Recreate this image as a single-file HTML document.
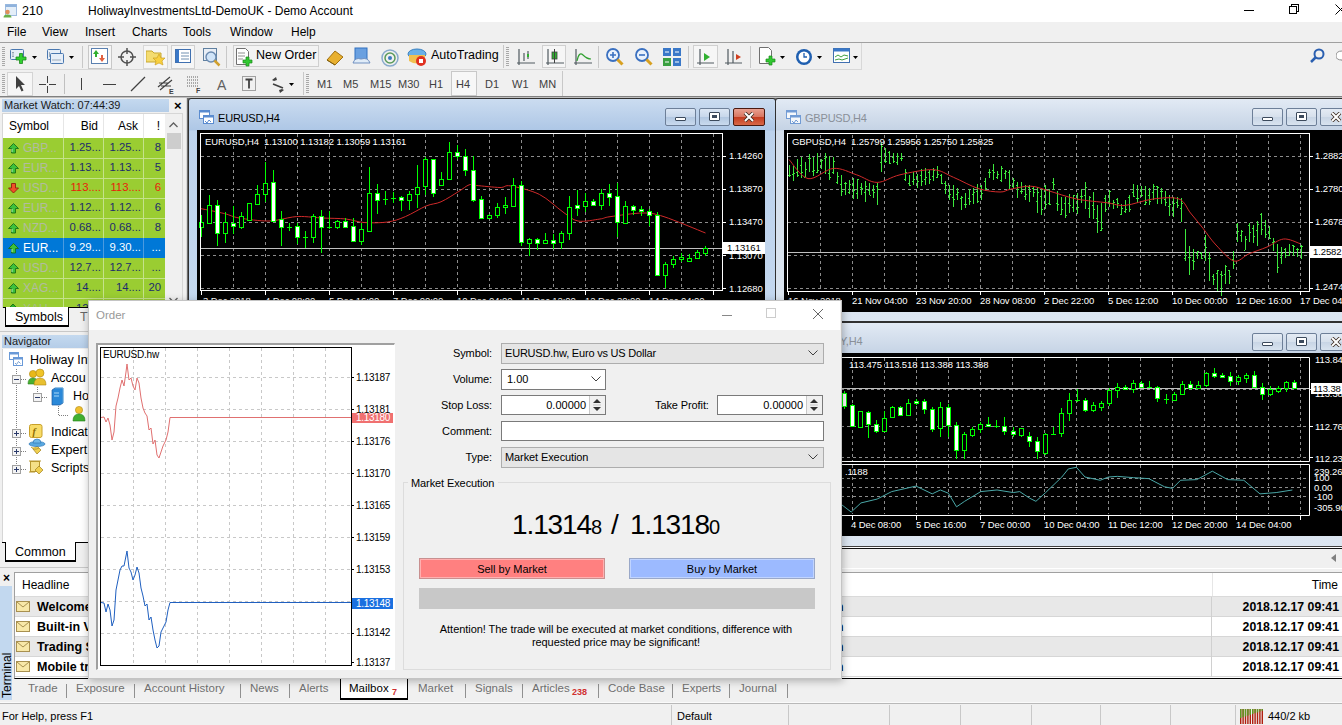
<!DOCTYPE html><html><head><meta charset="utf-8"><style>
*{margin:0;padding:0;box-sizing:border-box}
html,body{width:1342px;height:725px;overflow:hidden;background:#f0f0f0;font-family:"Liberation Sans",sans-serif;font-size:12px;color:#000}
.a{position:absolute}
.t{position:absolute;white-space:nowrap;line-height:1}
svg{position:absolute;overflow:hidden}
.ct{position:absolute;white-space:nowrap;line-height:1;font-size:9.5px;letter-spacing:-0.1px;color:#fff}
</style></head><body>
<div class="a" style="left:0px;top:0px;width:1342px;height:22px;background:#fff"></div>
<svg style="left:2px;top:4px" width="16" height="14"><rect x="3.5" y="0.5" width="11" height="11" fill="#e4eef8" stroke="#9fbce0"/><rect x="3.5" y="0.5" width="11" height="2.5" fill="#8fb2dc"/><circle cx="5.5" cy="8" r="2.3" fill="#e0905a"/><path d="M1.5 13.5 Q1.5 10.5 5.5 10.5 Q9.5 10.5 9.5 13.5Z" fill="#6ab04a"/></svg>
<div class="t" style="left:22px;top:5px;font-size:12.5px;color:#000">210</div>
<div class="t" style="left:88px;top:5px;font-size:12px;color:#000">HoliwayInvestmentsLtd-DemoUK - Demo Account</div>
<div class="a" style="left:1244px;top:10px;width:10px;height:1px;background:#000"></div>
<div class="a" style="left:1291px;top:4px;width:8px;height:8px;border:1px solid #000;background:#fff"></div>
<div class="a" style="left:1289px;top:6px;width:8px;height:8px;border:1px solid #000;background:#fff"></div>
<svg style="left:1335px;top:4px" width="11" height="11"><path d="M0.5 0.5L10.5 10.5M10.5 0.5L0.5 10.5" stroke="#000" stroke-width="1"/></svg>
<div class="t" style="left:7px;top:26px;font-size:12px">File</div>
<div class="t" style="left:42px;top:26px;font-size:12px">View</div>
<div class="t" style="left:85px;top:26px;font-size:12px">Insert</div>
<div class="t" style="left:132px;top:26px;font-size:12px">Charts</div>
<div class="t" style="left:183px;top:26px;font-size:12px">Tools</div>
<div class="t" style="left:230px;top:26px;font-size:12px">Window</div>
<div class="t" style="left:291px;top:26px;font-size:12px">Help</div>
<div class="a" style="left:0px;top:42px;width:1342px;height:1px;background:#a0a0a0"></div>
<div class="a" style="left:0px;top:69px;width:862px;height:1px;background:#d8d8d8"></div>
<div class="a" style="left:861px;top:43px;width:1px;height:26px;background:#d8d8d8"></div>
<div class="a" style="left:0px;top:96px;width:1342px;height:1px;background:#808080"></div>
<div class="a" style="left:0px;top:97px;width:1342px;height:1px;background:#bfbfbf"></div>
<svg style="left:2px;top:47px" width="4" height="20"><rect x="0" y="0" width="3" height="1" fill="#a8a8a8"/><rect x="0" y="2" width="3" height="1" fill="#a8a8a8"/><rect x="0" y="4" width="3" height="1" fill="#a8a8a8"/><rect x="0" y="6" width="3" height="1" fill="#a8a8a8"/><rect x="0" y="8" width="3" height="1" fill="#a8a8a8"/><rect x="0" y="10" width="3" height="1" fill="#a8a8a8"/><rect x="0" y="12" width="3" height="1" fill="#a8a8a8"/><rect x="0" y="14" width="3" height="1" fill="#a8a8a8"/><rect x="0" y="16" width="3" height="1" fill="#a8a8a8"/><rect x="0" y="18" width="3" height="1" fill="#a8a8a8"/></svg>
<svg style="left:2px;top:74px" width="4" height="20"><rect x="0" y="0" width="3" height="1" fill="#a8a8a8"/><rect x="0" y="2" width="3" height="1" fill="#a8a8a8"/><rect x="0" y="4" width="3" height="1" fill="#a8a8a8"/><rect x="0" y="6" width="3" height="1" fill="#a8a8a8"/><rect x="0" y="8" width="3" height="1" fill="#a8a8a8"/><rect x="0" y="10" width="3" height="1" fill="#a8a8a8"/><rect x="0" y="12" width="3" height="1" fill="#a8a8a8"/><rect x="0" y="14" width="3" height="1" fill="#a8a8a8"/><rect x="0" y="16" width="3" height="1" fill="#a8a8a8"/><rect x="0" y="18" width="3" height="1" fill="#a8a8a8"/></svg>
<svg style="left:506px;top:47px" width="4" height="20"><rect x="0" y="0" width="3" height="1" fill="#a8a8a8"/><rect x="0" y="2" width="3" height="1" fill="#a8a8a8"/><rect x="0" y="4" width="3" height="1" fill="#a8a8a8"/><rect x="0" y="6" width="3" height="1" fill="#a8a8a8"/><rect x="0" y="8" width="3" height="1" fill="#a8a8a8"/><rect x="0" y="10" width="3" height="1" fill="#a8a8a8"/><rect x="0" y="12" width="3" height="1" fill="#a8a8a8"/><rect x="0" y="14" width="3" height="1" fill="#a8a8a8"/><rect x="0" y="16" width="3" height="1" fill="#a8a8a8"/><rect x="0" y="18" width="3" height="1" fill="#a8a8a8"/></svg>
<svg style="left:306px;top:74px" width="4" height="20"><rect x="0" y="0" width="3" height="1" fill="#a8a8a8"/><rect x="0" y="2" width="3" height="1" fill="#a8a8a8"/><rect x="0" y="4" width="3" height="1" fill="#a8a8a8"/><rect x="0" y="6" width="3" height="1" fill="#a8a8a8"/><rect x="0" y="8" width="3" height="1" fill="#a8a8a8"/><rect x="0" y="10" width="3" height="1" fill="#a8a8a8"/><rect x="0" y="12" width="3" height="1" fill="#a8a8a8"/><rect x="0" y="14" width="3" height="1" fill="#a8a8a8"/><rect x="0" y="16" width="3" height="1" fill="#a8a8a8"/><rect x="0" y="18" width="3" height="1" fill="#a8a8a8"/></svg>
<svg style="left:10px;top:48px" width="20" height="20"><rect x="0.5" y="1.5" width="13" height="10" rx="1" fill="#e6eef8" stroke="#4a78b0"/><path d="M3 4v5M2 5l1-1 1 1M2 8l1 1 1-1" stroke="#8090a0" stroke-width="0.7" fill="none"/><path d="M9.5 5.5h3v3.5h3.5v3h-3.5v3.5h-3v-3.5h-3.5v-3h3.5z" fill="#30d030" stroke="#1a8a1a" stroke-width="0.8"/></svg>
<svg style="left:32px;top:56px" width="6" height="4"><path d="M0 0h5l-2.5 3z" fill="#000"/></svg>
<svg style="left:47px;top:48px" width="20" height="20"><rect x="0.5" y="1.5" width="13" height="10" rx="1" fill="#e6eef8" stroke="#4a78b0"/><rect x="3.5" y="5.5" width="13" height="10" rx="1" fill="#e6eef8" stroke="#4a78b0"/><path d="M5 12h9M2.5 4v5" stroke="#8090a0" stroke-width="0.7"/></svg>
<svg style="left:69px;top:56px" width="6" height="4"><path d="M0 0h5l-2.5 3z" fill="#000"/></svg>
<div class="a" style="left:82px;top:46px;width:1px;height:22px;background:#c8c8c8"></div>
<div class="a" style="left:88px;top:45px;width:24px;height:24px;border:1px solid #c8c8c8;background:#f6f6f6"></div>
<svg style="left:91px;top:48px" width="20" height="20"><rect x="0.5" y="0.5" width="16" height="15" fill="#fff" stroke="#5a80b0"/><path d="M5 2l3 4h-2v3h-2v-3h-2z" fill="#30b030"/><path d="M11 14l-3-4h2v-3h2v3h2z" fill="#e06040"/></svg>
<svg style="left:118px;top:48px" width="20" height="20"><circle cx="9" cy="9" r="6" fill="none" stroke="#505050" stroke-width="1.5"/><path d="M9 0v6M9 12v6M0 9h6M12 9h6" stroke="#505050" stroke-width="1.5"/></svg>
<div class="a" style="left:143px;top:45px;width:25px;height:24px;border:1px solid #d8d8d8;background:#f6f6f6"></div>
<svg style="left:146px;top:48px" width="20" height="20"><path d="M0 3h6l2 2h7v9h-15z" fill="#f4dc70" stroke="#c8a830"/><path d="M13 6l2 4h4l-3 3 1 4-4-2-4 2 1-4-3-3h4z" fill="#f8d040" stroke="#c89818" stroke-width="0.6"/></svg>
<div class="a" style="left:171px;top:45px;width:24px;height:24px;border:1px solid #d0d0d0;background:#f6f6f6"></div>
<svg style="left:175px;top:48px" width="20" height="20"><rect x="0.5" y="1.5" width="15" height="13" fill="#fff" stroke="#4070b0"/><rect x="1" y="2" width="3" height="12" fill="#3a78c8"/><path d="M6 5h8M6 8h8M6 11h8" stroke="#7090b0"/></svg>
<svg style="left:203px;top:48px" width="20" height="20"><rect x="0.5" y="0.5" width="13" height="12" fill="#e8eef6" stroke="#6080a0"/><circle cx="8" cy="9" r="5" fill="#d0e4f8" stroke="#6a8ab0" stroke-width="1.4"/><path d="M11.5 12.5l5 5" stroke="#d0a030" stroke-width="2.5"/></svg>
<div class="a" style="left:226px;top:46px;width:1px;height:22px;background:#c8c8c8"></div>
<div class="a" style="left:233px;top:45px;width:86px;height:22px;border:1px solid #cfcfcf;background:#f3f3f3"></div>
<svg style="left:236px;top:48px" width="20" height="20"><path d="M0.5 0.5h9l3 3v13h-12z" fill="#fff" stroke="#707070"/><path d="M2 5h7M2 8h7M2 11h5" stroke="#909090"/><path d="M10 9h3v3h3v3h-3v3h-3v-3h-3v-3h3z" fill="#32c832" stroke="#1a8a1a" stroke-width="0.7"/></svg>
<div class="t" style="left:256px;top:49px;font-size:12.5px">New Order</div>
<svg style="left:326px;top:49px" width="20" height="20"><path d="M1 11l8-9 8 6-8 8z" fill="#e8b030" stroke="#a07010"/><path d="M1 11l8 5" stroke="#806010"/></svg>
<svg style="left:352px;top:47px" width="20" height="20"><rect x="3" y="1" width="12" height="12" fill="#6aa0e0" stroke="#3070c0"/><path d="M1 16 Q3 10 9 12 Q16 10 18 16z" fill="#e0ecf8" stroke="#7090c0"/></svg>
<svg style="left:380px;top:47px" width="20" height="20"><circle cx="10" cy="11" r="8" fill="none" stroke="#88aacc" stroke-width="1.5"/><circle cx="10" cy="11" r="5" fill="none" stroke="#5a9a5a" stroke-width="1.5"/><circle cx="10" cy="11" r="2" fill="#3a7ac0"/></svg>
<svg style="left:407px;top:47px" width="20" height="20"><ellipse cx="10" cy="7" rx="9" ry="5" fill="#6ab0e8" stroke="#3a80c0"/><path d="M2 8h16v6q-8 5-16 0z" fill="#f0c050"/><circle cx="14" cy="14" r="5" fill="#e03020"/><rect x="12" y="12" width="4" height="4" fill="#fff"/></svg>
<div class="t" style="left:431px;top:49px;font-size:12.5px">AutoTrading</div>
<div class="a" style="left:503px;top:45px;width:1px;height:23px;background:#c8c8c8"></div>
<svg style="left:516px;top:47px" width="20" height="20"><path d="M3 2v16M1 16h18M8 6v8M12 4v8" stroke="#505a60" stroke-width="1.2" fill="none"/><path d="M12 7v3" stroke="#30b030" stroke-width="2"/></svg>
<div class="a" style="left:542px;top:45px;width:24px;height:23px;border:1px solid #d0d0d0;background:#f6f6f6"></div>
<svg style="left:545px;top:47px" width="20" height="20"><path d="M3 2v16M1 16h18" stroke="#505a60" stroke-width="1.2" fill="none"/><rect x="7" y="5" width="5" height="7" fill="#30b030" stroke="#404040" stroke-width="0.8"/><path d="M9.5 2v14" stroke="#404040"/></svg>
<svg style="left:573px;top:47px" width="20" height="20"><path d="M3 2v16M1 16h18" stroke="#505a60" stroke-width="1.2" fill="none"/><path d="M4 14 Q6 4 10 8 T18 12" stroke="#30a030" stroke-width="1.2" fill="none"/></svg>
<div class="a" style="left:598px;top:46px;width:1px;height:22px;background:#c8c8c8"></div>
<svg style="left:605px;top:47px" width="20" height="20"><circle cx="8" cy="8" r="6" fill="#eaf2fc" stroke="#3a70c0" stroke-width="1.8"/><path d="M5 8h6M8 5v6" stroke="#3a70c0" stroke-width="1.6"/><path d="M12.5 12.5l5 5" stroke="#d8a020" stroke-width="3"/></svg>
<svg style="left:634px;top:47px" width="20" height="20"><circle cx="8" cy="8" r="6" fill="#eaf2fc" stroke="#3a70c0" stroke-width="1.8"/><path d="M5 8h6" stroke="#3a70c0" stroke-width="1.6"/><path d="M12.5 12.5l5 5" stroke="#d8a020" stroke-width="3"/></svg>
<svg style="left:663px;top:47px" width="20" height="20"><rect x="0" y="1" width="8" height="8" fill="#3a78c8"/><rect x="10" y="1" width="8" height="8" fill="#3a78c8"/><rect x="0" y="11" width="8" height="8" fill="#3aa040"/><rect x="10" y="11" width="8" height="8" fill="#3a78c8"/><path d="M2 5h4M12 5h4M2 15h4M12 15h4" stroke="#fff"/></svg>
<div class="a" style="left:688px;top:46px;width:1px;height:22px;background:#c8c8c8"></div>
<div class="a" style="left:693px;top:45px;width:25px;height:23px;border:1px solid #d0d0d0;background:#f6f6f6"></div>
<svg style="left:696px;top:47px" width="20" height="20"><path d="M4 2v16M1 16h17" stroke="#505a60" stroke-width="1.2" fill="none"/><path d="M8 6l6 4-6 4z" fill="#30b030"/></svg>
<svg style="left:724px;top:47px" width="20" height="20"><path d="M4 2v16M1 16h17M9 4v12" stroke="#505a60" stroke-width="1.2" fill="none"/><path d="M17 10l-5-3v6z" fill="#d04020"/></svg>
<div class="a" style="left:750px;top:46px;width:1px;height:22px;background:#c8c8c8"></div>
<svg style="left:759px;top:47px" width="20" height="20"><path d="M0.5 0.5h9l3 3v13h-12z" fill="#fff" stroke="#707070"/><path d="M10 9h3v3h3v3h-3v3h-3v-3h-3v-3h3z" fill="#32c832" stroke="#1a8a1a" stroke-width="0.7"/></svg>
<svg style="left:780px;top:56px" width="6" height="4"><path d="M0 0h5l-2.5 3z" fill="#000"/></svg>
<svg style="left:795px;top:47px" width="20" height="20"><circle cx="9" cy="10" r="8" fill="#1f5fb0"/><circle cx="9" cy="10" r="5.5" fill="#fff"/><path d="M9 6v4h3" stroke="#1f5fb0" stroke-width="1.3" fill="none"/></svg>
<svg style="left:817px;top:56px" width="6" height="4"><path d="M0 0h5l-2.5 3z" fill="#000"/></svg>
<svg style="left:833px;top:48px" width="20" height="20"><rect x="0.5" y="0.5" width="16" height="14" fill="#fff" stroke="#4070b0"/><rect x="0.5" y="0.5" width="16" height="3" fill="#3a78c8"/><path d="M2 9l3-2 3 2 3-2 4 1M2 12l4-1 3 1 6-2" stroke="#40a040" fill="none"/></svg>
<svg style="left:853px;top:56px" width="6" height="4"><path d="M0 0h5l-2.5 3z" fill="#000"/></svg>
<svg style="left:1309px;top:48px" width="20" height="20"><circle cx="10" cy="6" r="4.5" fill="none" stroke="#2a5fb0" stroke-width="2"/><path d="M7 9l-5 5" stroke="#2a5fb0" stroke-width="2.5"/></svg>
<svg style="left:1336px;top:50px" width="8" height="16"><path d="M6 1 Q0 1 0 6 Q0 10 6 10 L7 13 L9 10 Q12 9 12 6" fill="#fff" stroke="#909090"/></svg>
<div class="a" style="left:7px;top:72px;width:26px;height:24px;border:1px solid #d4d4d4;background:#f6f6f6"></div>
<svg style="left:13px;top:75px" width="20" height="20"><path d="M3 1l9 9h-4l2.5 5.5-2 1-2.5-5.5-3 3z" fill="#404040"/></svg>
<svg style="left:39px;top:76px" width="20" height="20"><path d="M8.5 0v7M8.5 10v7M0 8.5h7M10 8.5h7" stroke="#404040" stroke-width="1"/></svg>
<div class="a" style="left:64px;top:74px;width:1px;height:20px;background:#c0c0c0"></div>
<div class="a" style="left:81px;top:78px;width:1px;height:12px;background:#404040"></div>
<div class="a" style="left:103px;top:84px;width:13px;height:1px;background:#404040"></div>
<svg style="left:130px;top:76px" width="20" height="20"><path d="M1 15L15 1" stroke="#404040" stroke-width="1.3"/></svg>
<svg style="left:157px;top:75px" width="20" height="20"><path d="M1 12l12-10M3 15l12-10M2 8h10M4 11h10" stroke="#404040" stroke-width="1.2" fill="none"/><text x="12" y="19" font-size="7" font-family="Liberation Sans" font-weight="bold" fill="#404040">E</text></svg>
<svg style="left:186px;top:75px" width="20" height="20"><path d="M1 2h12M1 5h12M1 8h12M1 11h12" stroke="#606060" stroke-dasharray="1 1"/><text x="10" y="18" font-size="7" font-family="Liberation Sans" font-weight="bold" fill="#404040">F</text></svg>
<div class="t" style="left:217px;top:78px;font-size:14px;color:#606060">A</div>
<svg style="left:242px;top:76px" width="20" height="20"><rect x="0.5" y="0.5" width="13" height="14" fill="none" stroke="#505050" stroke-dasharray="1 1"/><path d="M3.5 3.5h7M7 3.5v9" stroke="#404040" stroke-width="1.8"/></svg>
<svg style="left:271px;top:76px" width="20" height="20"><path d="M1 4l4-3 1 3-3 1zM13 14l-4 3-1-3 3-1z" fill="#404040"/><path d="M2 8l10 4" stroke="#404040" stroke-width="1.8"/></svg>
<svg style="left:289px;top:83px" width="6" height="4"><path d="M0 0h5l-2.5 3z" fill="#000"/></svg>
<div class="a" style="left:303px;top:72px;width:1px;height:23px;background:#c8c8c8"></div>
<div class="t" style="left:317px;top:79px;font-size:11px;color:#404040">M1</div>
<div class="t" style="left:343px;top:79px;font-size:11px;color:#404040">M5</div>
<div class="t" style="left:370px;top:79px;font-size:11px;color:#404040">M15</div>
<div class="t" style="left:398px;top:79px;font-size:11px;color:#404040">M30</div>
<div class="t" style="left:429px;top:79px;font-size:11px;color:#404040">H1</div>
<div class="a" style="left:451px;top:71px;width:26px;height:25px;border:1px solid #c8c8c8;background:#f7f7f7"></div>
<div class="t" style="left:456px;top:79px;font-size:11px;color:#404040">H4</div>
<div class="t" style="left:485px;top:79px;font-size:11px;color:#404040">D1</div>
<div class="t" style="left:512px;top:79px;font-size:11px;color:#404040">W1</div>
<div class="t" style="left:539px;top:79px;font-size:11px;color:#404040">MN</div>
<div class="a" style="left:562px;top:71px;width:1px;height:25px;background:#c8c8c8"></div>
<div class="a" style="left:187px;top:98px;width:1155px;height:470px;background:#6d6d6d"></div>
<div class="a" style="left:0px;top:98px;width:187px;height:236px;background:#f0f0f0"></div>
<div class="a" style="left:186px;top:98px;width:1px;height:470px;background:#d8d8d8"></div>
<div class="a" style="left:2px;top:99px;width:167px;height:13px;background:linear-gradient(#c4d9ef,#b5cde8)"></div>
<div class="t" style="left:4px;top:100px;font-size:11px;color:#1a1a1a">Market Watch: 07:44:39</div>
<div class="t" style="left:174px;top:99px;font-size:13px;font-weight:bold;color:#000">&#215;</div>
<div class="a" style="left:2px;top:113px;width:181px;height:195px;background:#fff;border:1px solid #d6d6d6"></div>
<div class="t" style="left:9px;top:120px;font-size:12px">Symbol</div>
<div class="t" style="right:1244px;top:120px;font-size:12px">Bid</div>
<div class="t" style="right:1204px;top:120px;font-size:12px">Ask</div>
<div class="t" style="right:1182px;top:120px;font-size:12px">!</div>
<div class="a" style="left:63px;top:114px;width:1px;height:24px;background:#e6e6e6"></div>
<div class="a" style="left:103px;top:114px;width:1px;height:24px;background:#e6e6e6"></div>
<div class="a" style="left:143px;top:114px;width:1px;height:24px;background:#e6e6e6"></div>
<div class="a" style="left:3px;top:138px;width:162px;height:20px;background:#9acd32"></div>
<div class="a" style="left:63px;top:138px;width:1px;height:20px;background:#c4e28a"></div>
<div class="a" style="left:103px;top:138px;width:1px;height:20px;background:#c4e28a"></div>
<div class="a" style="left:143px;top:138px;width:1px;height:20px;background:#c4e28a"></div>
<svg style="left:7px;top:142px" width="13" height="13"><path d="M6.5 1.5l5 5h-3v4.5h-4v-4.5h-3z" fill="#3cc03c" stroke="#187018" stroke-width="0.9" stroke-linejoin="round"/><path d="M5 7v3" stroke="#b0f0b0" stroke-width="1"/></svg>
<div class="t" style="left:23px;top:142px;font-size:12px;color:#b2bca0">GBP...</div>
<div class="t" style="right:1241px;top:142px;font-size:11.3px;color:#1c2c6c">1.25...</div>
<div class="t" style="right:1201px;top:142px;font-size:11.3px;color:#1c2c6c">1.25...</div>
<div class="t" style="right:1181px;top:142px;font-size:11.3px;color:#1c2c6c">8</div>
<div class="a" style="left:3px;top:158px;width:162px;height:20px;background:#9acd32"></div>
<div class="a" style="left:63px;top:158px;width:1px;height:20px;background:#c4e28a"></div>
<div class="a" style="left:103px;top:158px;width:1px;height:20px;background:#c4e28a"></div>
<div class="a" style="left:143px;top:158px;width:1px;height:20px;background:#c4e28a"></div>
<svg style="left:7px;top:162px" width="13" height="13"><path d="M6.5 1.5l5 5h-3v4.5h-4v-4.5h-3z" fill="#3cc03c" stroke="#187018" stroke-width="0.9" stroke-linejoin="round"/><path d="M5 7v3" stroke="#b0f0b0" stroke-width="1"/></svg>
<div class="t" style="left:23px;top:162px;font-size:12px;color:#b2bca0">EUR...</div>
<div class="t" style="right:1241px;top:162px;font-size:11.3px;color:#1c2c6c">1.13...</div>
<div class="t" style="right:1201px;top:162px;font-size:11.3px;color:#1c2c6c">1.13...</div>
<div class="t" style="right:1181px;top:162px;font-size:11.3px;color:#1c2c6c">5</div>
<div class="a" style="left:3px;top:178px;width:162px;height:20px;background:#9acd32"></div>
<div class="a" style="left:63px;top:178px;width:1px;height:20px;background:#c4e28a"></div>
<div class="a" style="left:103px;top:178px;width:1px;height:20px;background:#c4e28a"></div>
<div class="a" style="left:143px;top:178px;width:1px;height:20px;background:#c4e28a"></div>
<svg style="left:7px;top:182px" width="13" height="13"><path d="M6.5 11l5-5h-3v-4.5h-4v4.5h-3z" fill="#f05028" stroke="#902010" stroke-width="0.9" stroke-linejoin="round"/></svg>
<div class="t" style="left:23px;top:182px;font-size:12px;color:#b2bca0">USD...</div>
<div class="t" style="right:1241px;top:182px;font-size:11.3px;color:#e8200a">113....</div>
<div class="t" style="right:1201px;top:182px;font-size:11.3px;color:#e8200a">113....</div>
<div class="t" style="right:1181px;top:182px;font-size:11.3px;color:#e8200a">6</div>
<div class="a" style="left:3px;top:198px;width:162px;height:20px;background:#9acd32"></div>
<div class="a" style="left:63px;top:198px;width:1px;height:20px;background:#c4e28a"></div>
<div class="a" style="left:103px;top:198px;width:1px;height:20px;background:#c4e28a"></div>
<div class="a" style="left:143px;top:198px;width:1px;height:20px;background:#c4e28a"></div>
<svg style="left:7px;top:202px" width="13" height="13"><path d="M6.5 1.5l5 5h-3v4.5h-4v-4.5h-3z" fill="#3cc03c" stroke="#187018" stroke-width="0.9" stroke-linejoin="round"/><path d="M5 7v3" stroke="#b0f0b0" stroke-width="1"/></svg>
<div class="t" style="left:23px;top:202px;font-size:12px;color:#b2bca0">EUR...</div>
<div class="t" style="right:1241px;top:202px;font-size:11.3px;color:#1c2c6c">1.12...</div>
<div class="t" style="right:1201px;top:202px;font-size:11.3px;color:#1c2c6c">1.12...</div>
<div class="t" style="right:1181px;top:202px;font-size:11.3px;color:#1c2c6c">6</div>
<div class="a" style="left:3px;top:218px;width:162px;height:20px;background:#9acd32"></div>
<div class="a" style="left:63px;top:218px;width:1px;height:20px;background:#c4e28a"></div>
<div class="a" style="left:103px;top:218px;width:1px;height:20px;background:#c4e28a"></div>
<div class="a" style="left:143px;top:218px;width:1px;height:20px;background:#c4e28a"></div>
<svg style="left:7px;top:222px" width="13" height="13"><path d="M6.5 1.5l5 5h-3v4.5h-4v-4.5h-3z" fill="#3cc03c" stroke="#187018" stroke-width="0.9" stroke-linejoin="round"/><path d="M5 7v3" stroke="#b0f0b0" stroke-width="1"/></svg>
<div class="t" style="left:23px;top:222px;font-size:12px;color:#b2bca0">NZD...</div>
<div class="t" style="right:1241px;top:222px;font-size:11.3px;color:#1c2c6c">0.68...</div>
<div class="t" style="right:1201px;top:222px;font-size:11.3px;color:#1c2c6c">0.68...</div>
<div class="t" style="right:1181px;top:222px;font-size:11.3px;color:#1c2c6c">8</div>
<div class="a" style="left:3px;top:238px;width:162px;height:20px;background:#0078d7"></div>
<div class="a" style="left:63px;top:238px;width:1px;height:20px;background:#4a9ae0"></div>
<div class="a" style="left:103px;top:238px;width:1px;height:20px;background:#4a9ae0"></div>
<div class="a" style="left:143px;top:238px;width:1px;height:20px;background:#4a9ae0"></div>
<svg style="left:7px;top:242px" width="13" height="13"><path d="M6.5 1.5l5 5h-3v4.5h-4v-4.5h-3z" fill="#3cc03c" stroke="#187018" stroke-width="0.9" stroke-linejoin="round"/><path d="M5 7v3" stroke="#b0f0b0" stroke-width="1"/></svg>
<div class="t" style="left:23px;top:242px;font-size:12px;color:#ffffff">EUR...</div>
<div class="t" style="right:1241px;top:242px;font-size:11.3px;color:#ffffff">9.29...</div>
<div class="t" style="right:1201px;top:242px;font-size:11.3px;color:#ffffff">9.30...</div>
<div class="t" style="right:1181px;top:242px;font-size:11.3px;color:#ffffff">...</div>
<div class="a" style="left:3px;top:258px;width:162px;height:20px;background:#9acd32"></div>
<div class="a" style="left:63px;top:258px;width:1px;height:20px;background:#c4e28a"></div>
<div class="a" style="left:103px;top:258px;width:1px;height:20px;background:#c4e28a"></div>
<div class="a" style="left:143px;top:258px;width:1px;height:20px;background:#c4e28a"></div>
<svg style="left:7px;top:262px" width="13" height="13"><path d="M6.5 1.5l5 5h-3v4.5h-4v-4.5h-3z" fill="#3cc03c" stroke="#187018" stroke-width="0.9" stroke-linejoin="round"/><path d="M5 7v3" stroke="#b0f0b0" stroke-width="1"/></svg>
<div class="t" style="left:23px;top:262px;font-size:12px;color:#b2bca0">USD...</div>
<div class="t" style="right:1241px;top:262px;font-size:11.3px;color:#1c2c6c">12.7...</div>
<div class="t" style="right:1201px;top:262px;font-size:11.3px;color:#1c2c6c">12.7...</div>
<div class="t" style="right:1181px;top:262px;font-size:11.3px;color:#1c2c6c">...</div>
<div class="a" style="left:3px;top:278px;width:162px;height:20px;background:#9acd32"></div>
<div class="a" style="left:63px;top:278px;width:1px;height:20px;background:#c4e28a"></div>
<div class="a" style="left:103px;top:278px;width:1px;height:20px;background:#c4e28a"></div>
<div class="a" style="left:143px;top:278px;width:1px;height:20px;background:#c4e28a"></div>
<svg style="left:7px;top:282px" width="13" height="13"><path d="M6.5 1.5l5 5h-3v4.5h-4v-4.5h-3z" fill="#3cc03c" stroke="#187018" stroke-width="0.9" stroke-linejoin="round"/><path d="M5 7v3" stroke="#b0f0b0" stroke-width="1"/></svg>
<div class="t" style="left:23px;top:282px;font-size:12px;color:#b2bca0">XAG...</div>
<div class="t" style="right:1241px;top:282px;font-size:11.3px;color:#1c2c6c">14....</div>
<div class="t" style="right:1201px;top:282px;font-size:11.3px;color:#1c2c6c">14....</div>
<div class="t" style="right:1181px;top:282px;font-size:11.3px;color:#1c2c6c">20</div>
<div class="a" style="left:3px;top:298px;width:162px;height:9px;background:#9acd32"></div>
<div class="a" style="left:63px;top:298px;width:1px;height:9px;background:#c4e28a"></div>
<div class="a" style="left:103px;top:298px;width:1px;height:9px;background:#c4e28a"></div>
<div class="a" style="left:143px;top:298px;width:1px;height:9px;background:#c4e28a"></div>
<div class="a" style="left:0;top:299px;width:165px;height:8px;overflow:hidden">
<svg style="left:7px;top:4px" width="13" height="13"><path d="M6 1l5 5h-3v5h-4v-5h-3z" fill="#2ab02a" stroke="#106010" stroke-width="0.8"/></svg>
<div class="t" style="left:23px;top:4px;font-size:12px;color:#a9bd8a">XAU...</div>
<div class="t" style="right:64px;top:4px;font-size:11.3px;color:#1c2c6c">12....</div>
<div class="t" style="right:24px;top:4px;font-size:11.3px;color:#1c2c6c">12....</div>
</div>
<div class="a" style="left:3px;top:158px;width:162px;height:1px;background:#c4e28a"></div>
<div class="a" style="left:3px;top:178px;width:162px;height:1px;background:#c4e28a"></div>
<div class="a" style="left:3px;top:198px;width:162px;height:1px;background:#c4e28a"></div>
<div class="a" style="left:3px;top:218px;width:162px;height:1px;background:#c4e28a"></div>
<div class="a" style="left:3px;top:278px;width:162px;height:1px;background:#c4e28a"></div>
<div class="a" style="left:3px;top:298px;width:162px;height:1px;background:#c4e28a"></div>
<div class="a" style="left:165px;top:114px;width:17px;height:193px;background:#f0f0f0"></div>
<svg style="left:169px;top:122px" width="9" height="6"><path d="M0.5 5L4.5 1L8.5 5" stroke="#606060" stroke-width="1.3" fill="none"/></svg>
<div class="a" style="left:167px;top:133px;width:14px;height:16px;background:#cdcdcd"></div>
<svg style="left:169px;top:297px" width="9" height="6"><path d="M0.5 1L4.5 5L8.5 1" stroke="#606060" stroke-width="1.3" fill="none"/></svg>
<div class="a" style="left:3px;top:307px;width:180px;height:1px;background:#000"></div>
<div class="a" style="left:5px;top:307px;width:64px;height:20px;background:#fff;border:1px solid #000;border-top:none;border-bottom-width:2px"></div>
<div class="t" style="left:15px;top:311px;font-size:12.5px">Symbols</div>
<div class="t" style="left:80px;top:311px;font-size:12.5px;color:#666">T</div>
<div class="a" style="left:0px;top:331px;width:186px;height:1px;background:#c8c8c8"></div>
<div class="a" style="left:2px;top:335px;width:184px;height:13px;background:linear-gradient(#c4d9ef,#b5cde8)"></div>
<div class="t" style="left:4px;top:336px;font-size:11px;color:#1a1a1a">Navigator</div>
<div class="a" style="left:2px;top:349px;width:184px;height:194px;background:#fff;border-left:1px solid #d6d6d6"></div>
<div class="a" style="left:2px;top:542px;width:184px;height:1px;background:#000"></div>
<svg style="left:0;top:349px" width="90" height="130"><path d="M16.5 20V120M21 30.5h6M37.5 38v5M42 48.5h6M58.5 57v9.5h10M21 84.5h6M21 102.5h6M21 120.5h6" stroke="#808080" stroke-dasharray="1 1" fill="none"/><rect x="12.5" y="26.5" width="8" height="8" fill="#f4f4f4" stroke="#a0a0a0"/><path d="M14 30.5h5" stroke="#2a3a6a"/><rect x="33.5" y="44.5" width="8" height="8" fill="#f4f4f4" stroke="#a0a0a0"/><path d="M35 48.5h5" stroke="#2a3a6a"/><rect x="12.5" y="80.5" width="8" height="8" fill="#f4f4f4" stroke="#a0a0a0"/><path d="M14 84.5h5" stroke="#2a3a6a"/><path d="M16.5 82v5" stroke="#2a3a6a"/><rect x="12.5" y="98.5" width="8" height="8" fill="#f4f4f4" stroke="#a0a0a0"/><path d="M14 102.5h5" stroke="#2a3a6a"/><path d="M16.5 100v5" stroke="#2a3a6a"/><rect x="12.5" y="116.5" width="8" height="8" fill="#f4f4f4" stroke="#a0a0a0"/><path d="M14 120.5h5" stroke="#2a3a6a"/><path d="M16.5 118v5" stroke="#2a3a6a"/><rect x="9.5" y="3.5" width="9" height="7" fill="#fff" stroke="#6a9ad8"/><rect x="9.5" y="3.5" width="9" height="2" fill="#6a9ad8"/><rect x="13.5" y="8.5" width="9" height="8" fill="#fff" stroke="#6a9ad8"/><rect x="13.5" y="8.5" width="9" height="2" fill="#6a9ad8"/><path d="M15 14l1.5 1.5 2-3 2 2" stroke="#5a8ac8" fill="none" stroke-width="0.8"/><circle cx="33" cy="25" r="3.6" fill="#e8b818" stroke="#b08810" stroke-width="0.6"/><path d="M28 35q0-6 5-6q5 0 5 6z" fill="#48b030" stroke="#2a8020" stroke-width="0.6"/><circle cx="40" cy="24" r="4" fill="#f0c428" stroke="#b08810" stroke-width="0.6"/><path d="M34 36q0-7 6-7q6 0 6 7z" fill="#e8c030" stroke="#b08810" stroke-width="0.6"/><path d="M52 41l3-2h8v15l-3 2h-8z" fill="#2a88d8" stroke="#1a5aa0" stroke-width="0.7"/><path d="M55 39h8v15" fill="none" stroke="#7ac0f0" stroke-width="0.8"/><path d="M54 44h5M54 47h5" stroke="#a8d8f8"/><circle cx="79" cy="61" r="3.6" fill="#f0c030" stroke="#b08810" stroke-width="0.6"/><path d="M73 72q0-7 6-7q6 0 6 7z" fill="#40b030" stroke="#208018" stroke-width="0.6"/><rect x="29.5" y="75.5" width="12.5" height="13" rx="2" fill="#f8dc68" stroke="#c8a028"/><text x="32.5" y="86" font-size="10" font-style="italic" font-weight="bold" fill="#8a6a00" font-family="Liberation Serif">f</text><path d="M33 100l4-3 4 4-4 4z" fill="#f0d050" stroke="#a08020" stroke-width="0.7"/><path d="M31 98q3 4 8 1" fill="#e8c850" stroke="#a08020" stroke-width="0.6"/><ellipse cx="37" cy="95" rx="8" ry="2.6" fill="#58a8e0" stroke="#2a70b0" stroke-width="0.6"/><path d="M33 94q0-4 4-4q4 0 4 4z" fill="#70b8e8" stroke="#2a70b0" stroke-width="0.6"/><rect x="30.5" y="112.5" width="9" height="10" fill="#f4e088" stroke="#b89830"/><path d="M29 112h12M29 123h6" stroke="#b89830"/><path d="M35 121l4-4 4 4-4 4z" fill="#f0d050" stroke="#a08020" stroke-width="0.7"/></svg>
<div class="t" style="left:30px;top:354px;font-size:12.5px">Holiway Inv</div>
<div class="t" style="left:51px;top:372px;font-size:12.5px">Accou</div>
<div class="t" style="left:73px;top:390px;font-size:12.5px">Ho</div>
<div class="t" style="left:51px;top:426px;font-size:12.5px">Indicat</div>
<div class="t" style="left:51px;top:444px;font-size:12.5px">Expert A</div>
<div class="t" style="left:51px;top:462px;font-size:12.5px">Scripts</div>
<div class="a" style="left:5px;top:542px;width:71px;height:20px;background:#fff;border:1px solid #000;border-top:none;border-bottom-width:2px"></div>
<div class="t" style="left:15px;top:546px;font-size:12.5px">Common</div>
<div class="a" style="left:0px;top:567px;width:187px;height:1px;background:#c8c8c8"></div><div class="a" style="left:188px;top:98px;width:588px;height:215px;background:linear-gradient(#cbdcf0 0px,#aec7e6 31px,#bcd2ec 32px,#c4d8ef 100%);border:1px solid #303030;border-radius:3px 3px 0 0"></div>
<svg style="left:199px;top:110px;opacity:1" width="15" height="14"><rect x="0.5" y="0.5" width="10" height="8" fill="#fff" stroke="#5b8cd0"/><rect x="0.5" y="0.5" width="10" height="2" fill="#5b8cd0"/><rect x="4.5" y="5.5" width="10" height="8" fill="#fff" stroke="#5b8cd0"/><rect x="4.5" y="5.5" width="10" height="2" fill="#5b8cd0"/><path d="M6 11l2 2 2-3 2 2" stroke="#5b8cd0" fill="none"/></svg>
<div class="t" style="left:218px;top:113px;font-size:11px;letter-spacing:-0.2px;color:#000">EURUSD,H4</div>
<div class="a" style="left:665px;top:108px;width:31px;height:18px;background:linear-gradient(#dbe6f4,#c7d7eb 50%,#b2c7e1 51%,#c9daee);border:1px solid #6d7f98;border-radius:2px"></div>
<div class="a" style="left:699px;top:108px;width:31px;height:18px;background:linear-gradient(#dbe6f4,#c7d7eb 50%,#b2c7e1 51%,#c9daee);border:1px solid #6d7f98;border-radius:2px"></div>
<div class="a" style="left:675px;top:117px;width:11px;height:4px;background:#fff;border:1px solid #3c4a5c;border-radius:1px"></div>
<div class="a" style="left:709px;top:112px;width:11px;height:9px;background:#fff;border:1px solid #3c4a5c;border-radius:1px"></div>
<div class="a" style="left:712px;top:115px;width:5px;height:3px;background:#3c4a5c"></div>
<div class="a" style="left:733px;top:108px;width:32px;height:18px;background:linear-gradient(#e8a090,#d87560 50%,#c43c20 51%,#d86848);border:1px solid #4a1a10;border-radius:2px"></div>
<svg style="left:743px;top:112px" width="12" height="10"><path d="M2 1L10 9M10 1L2 9" stroke="#3c2a20" stroke-width="3.6"/><path d="M2 1L10 9M10 1L2 9" stroke="#fff" stroke-width="2"/></svg>
<div class="a" style="left:197px;top:130px;width:568px;height:179px;background:#000"></div>
<svg style="left:197px;top:129px" width="568" height="175" viewBox="197 129 568 175"><path d="M233.5 134V289" stroke="#8c8c8c" stroke-dasharray="3 3"/><path d="M265.5 134V289" stroke="#8c8c8c" stroke-dasharray="3 3"/><path d="M297.5 134V289" stroke="#8c8c8c" stroke-dasharray="3 3"/><path d="M329.5 134V289" stroke="#8c8c8c" stroke-dasharray="3 3"/><path d="M361.5 134V289" stroke="#8c8c8c" stroke-dasharray="3 3"/><path d="M393.5 134V289" stroke="#8c8c8c" stroke-dasharray="3 3"/><path d="M425.5 134V289" stroke="#8c8c8c" stroke-dasharray="3 3"/><path d="M457.5 134V289" stroke="#8c8c8c" stroke-dasharray="3 3"/><path d="M489.5 134V289" stroke="#8c8c8c" stroke-dasharray="3 3"/><path d="M521.5 134V289" stroke="#8c8c8c" stroke-dasharray="3 3"/><path d="M553.5 134V289" stroke="#8c8c8c" stroke-dasharray="3 3"/><path d="M585.5 134V289" stroke="#8c8c8c" stroke-dasharray="3 3"/><path d="M617.5 134V289" stroke="#8c8c8c" stroke-dasharray="3 3"/><path d="M649.5 134V289" stroke="#8c8c8c" stroke-dasharray="3 3"/><path d="M681.5 134V289" stroke="#8c8c8c" stroke-dasharray="3 3"/><path d="M713.5 134V289" stroke="#8c8c8c" stroke-dasharray="3 3"/><path d="M201 156.5H722" stroke="#8c8c8c" stroke-dasharray="3 3"/><path d="M201 189.5H722" stroke="#8c8c8c" stroke-dasharray="3 3"/><path d="M201 222.5H722" stroke="#8c8c8c" stroke-dasharray="3 3"/><path d="M201 255.5H722" stroke="#8c8c8c" stroke-dasharray="3 3"/><path d="M201 288.5H722" stroke="#8c8c8c" stroke-dasharray="3 3"/><path d="M201 248.5H722" stroke="#c0c0c0"/><path d="M200.8 208.6 C204.8 209.4 218.1 212.0 224.5 213.6 C230.9 215.2 231.9 216.8 239.3 218.0 C246.7 219.2 260.1 221.2 269.0 221.0 C277.9 220.8 286.8 217.7 292.7 217.0 C298.6 216.3 299.6 216.4 304.5 216.6 C309.4 216.8 315.4 217.6 322.3 218.0 C329.2 218.4 339.1 218.2 346.0 219.0 C352.9 219.8 357.0 222.0 363.9 222.5 C370.8 223.0 380.7 223.0 387.6 222.0 C394.5 221.0 399.0 219.3 405.4 216.6 C411.8 213.9 420.2 208.5 426.1 206.0 C432.0 203.5 435.6 204.2 441.0 201.8 C446.4 199.4 454.1 194.2 458.8 191.4 C463.5 188.6 466.1 185.9 469.0 184.9 C471.9 183.9 471.3 185.1 476.5 185.5 C481.7 185.9 494.3 187.4 500.0 187.5 C505.7 187.6 504.0 184.8 510.6 185.9 C517.2 187.1 530.7 190.1 539.4 194.4 C548.1 198.8 556.6 207.6 563.0 212.0 C569.4 216.4 571.8 219.8 578.0 221.0 C584.2 222.2 594.7 219.7 600.0 219.0 C605.3 218.3 602.8 217.7 610.0 216.7 C617.2 215.7 634.0 213.0 643.0 213.0 C652.0 213.0 653.6 213.4 664.0 216.7 C674.4 220.0 698.6 230.3 705.5 233.0" stroke="#d02a2a" stroke-width="1" fill="none"/><path d="M201.5 215V237" stroke="#00ff00" stroke-width="1"/><rect x="199.5" y="222.5" width="4" height="5" fill="#000000" stroke="#00ff00" stroke-width="1"/><path d="M209.5 195V223" stroke="#00ff00" stroke-width="1"/><rect x="207.5" y="205.5" width="4" height="18" fill="#000000" stroke="#00ff00" stroke-width="1"/><path d="M217.5 200V246" stroke="#00ff00" stroke-width="1"/><rect x="215.5" y="205.5" width="4" height="28" fill="#ffffff" stroke="#00ff00" stroke-width="1"/><path d="M225.5 212V243" stroke="#00ff00" stroke-width="1"/><rect x="223.5" y="222.5" width="4" height="11" fill="#000000" stroke="#00ff00" stroke-width="1"/><path d="M233.5 206V234" stroke="#00ff00" stroke-width="1"/><rect x="231.5" y="223.5" width="4" height="3" fill="#ffffff" stroke="#00ff00" stroke-width="1"/><path d="M241.5 212V229" stroke="#00ff00" stroke-width="1"/><rect x="239.5" y="216.5" width="4" height="11" fill="#000000" stroke="#00ff00" stroke-width="1"/><path d="M249.5 203V221" stroke="#00ff00" stroke-width="1"/><rect x="247.5" y="203.5" width="4" height="17" fill="#000000" stroke="#00ff00" stroke-width="1"/><path d="M257.5 185V205" stroke="#00ff00" stroke-width="1"/><rect x="255.5" y="194.5" width="4" height="10" fill="#000000" stroke="#00ff00" stroke-width="1"/><path d="M265.5 162V202" stroke="#00ff00" stroke-width="1"/><rect x="263.5" y="183.5" width="4" height="11" fill="#000000" stroke="#00ff00" stroke-width="1"/><path d="M273.5 170V221" stroke="#00ff00" stroke-width="1"/><rect x="271.5" y="182.5" width="4" height="39" fill="#ffffff" stroke="#00ff00" stroke-width="1"/><path d="M281.5 211V246" stroke="#00ff00" stroke-width="1"/><rect x="279.5" y="219.5" width="4" height="8" fill="#ffffff" stroke="#00ff00" stroke-width="1"/><path d="M289.5 223V231" stroke="#00ff00" stroke-width="1"/><path d="M287 227.5h5" stroke="#00ff00" stroke-width="1"/><path d="M297.5 223V244" stroke="#00ff00" stroke-width="1"/><rect x="295.5" y="226.5" width="4" height="11" fill="#ffffff" stroke="#00ff00" stroke-width="1"/><path d="M305.5 231V248" stroke="#00ff00" stroke-width="1"/><path d="M303 237.5h5" stroke="#00ff00" stroke-width="1"/><path d="M313.5 214V243" stroke="#00ff00" stroke-width="1"/><rect x="311.5" y="216.5" width="4" height="21" fill="#000000" stroke="#00ff00" stroke-width="1"/><path d="M321.5 210V253" stroke="#00ff00" stroke-width="1"/><rect x="319.5" y="216.5" width="4" height="11" fill="#ffffff" stroke="#00ff00" stroke-width="1"/><path d="M329.5 211V229" stroke="#00ff00" stroke-width="1"/><path d="M327 227.5h5" stroke="#00ff00" stroke-width="1"/><path d="M337.5 220V229" stroke="#00ff00" stroke-width="1"/><rect x="335.5" y="221.5" width="4" height="6" fill="#000000" stroke="#00ff00" stroke-width="1"/><path d="M345.5 218V228" stroke="#00ff00" stroke-width="1"/><rect x="343.5" y="221.5" width="4" height="6" fill="#ffffff" stroke="#00ff00" stroke-width="1"/><path d="M353.5 218V241" stroke="#00ff00" stroke-width="1"/><rect x="351.5" y="226.5" width="4" height="15" fill="#ffffff" stroke="#00ff00" stroke-width="1"/><path d="M361.5 223V245" stroke="#00ff00" stroke-width="1"/><rect x="359.5" y="229.5" width="4" height="12" fill="#000000" stroke="#00ff00" stroke-width="1"/><path d="M369.5 167V232" stroke="#00ff00" stroke-width="1"/><rect x="367.5" y="193.5" width="4" height="38" fill="#000000" stroke="#00ff00" stroke-width="1"/><path d="M377.5 184V214" stroke="#00ff00" stroke-width="1"/><rect x="375.5" y="193.5" width="4" height="7" fill="#ffffff" stroke="#00ff00" stroke-width="1"/><path d="M385.5 191V205" stroke="#00ff00" stroke-width="1"/><path d="M383 199.5h5" stroke="#00ff00" stroke-width="1"/><path d="M393.5 192V203" stroke="#00ff00" stroke-width="1"/><path d="M391 198.5h5" stroke="#00ff00" stroke-width="1"/><path d="M401.5 196V211" stroke="#00ff00" stroke-width="1"/><rect x="399.5" y="197.5" width="4" height="3" fill="#ffffff" stroke="#00ff00" stroke-width="1"/><path d="M409.5 191V210" stroke="#00ff00" stroke-width="1"/><rect x="407.5" y="194.5" width="4" height="6" fill="#000000" stroke="#00ff00" stroke-width="1"/><path d="M417.5 165V208" stroke="#00ff00" stroke-width="1"/><rect x="415.5" y="187.5" width="4" height="7" fill="#000000" stroke="#00ff00" stroke-width="1"/><path d="M425.5 157V195" stroke="#00ff00" stroke-width="1"/><rect x="423.5" y="159.5" width="4" height="27" fill="#000000" stroke="#00ff00" stroke-width="1"/><path d="M433.5 159V197" stroke="#00ff00" stroke-width="1"/><rect x="431.5" y="159.5" width="4" height="34" fill="#ffffff" stroke="#00ff00" stroke-width="1"/><path d="M441.5 172V186" stroke="#00ff00" stroke-width="1"/><rect x="439.5" y="179.5" width="4" height="6" fill="#000000" stroke="#00ff00" stroke-width="1"/><path d="M449.5 142V180" stroke="#00ff00" stroke-width="1"/><rect x="447.5" y="152.5" width="4" height="27" fill="#000000" stroke="#00ff00" stroke-width="1"/><path d="M457.5 145V159" stroke="#00ff00" stroke-width="1"/><rect x="455.5" y="152.5" width="4" height="4" fill="#ffffff" stroke="#00ff00" stroke-width="1"/><path d="M465.5 149V176" stroke="#00ff00" stroke-width="1"/><rect x="463.5" y="156.5" width="4" height="14" fill="#ffffff" stroke="#00ff00" stroke-width="1"/><path d="M473.5 156V202" stroke="#00ff00" stroke-width="1"/><rect x="471.5" y="170.5" width="4" height="30" fill="#ffffff" stroke="#00ff00" stroke-width="1"/><path d="M481.5 196V219" stroke="#00ff00" stroke-width="1"/><rect x="479.5" y="199.5" width="4" height="19" fill="#ffffff" stroke="#00ff00" stroke-width="1"/><path d="M489.5 214V219" stroke="#00ff00" stroke-width="1"/><rect x="487.5" y="215.5" width="4" height="3" fill="#000000" stroke="#00ff00" stroke-width="1"/><path d="M497.5 203V218" stroke="#00ff00" stroke-width="1"/><rect x="495.5" y="207.5" width="4" height="8" fill="#000000" stroke="#00ff00" stroke-width="1"/><path d="M505.5 197V214" stroke="#00ff00" stroke-width="1"/><rect x="503.5" y="205.5" width="4" height="2" fill="#000000" stroke="#00ff00" stroke-width="1"/><path d="M513.5 178V207" stroke="#00ff00" stroke-width="1"/><rect x="511.5" y="185.5" width="4" height="21" fill="#000000" stroke="#00ff00" stroke-width="1"/><path d="M521.5 181V246" stroke="#00ff00" stroke-width="1"/><rect x="519.5" y="185.5" width="4" height="57" fill="#ffffff" stroke="#00ff00" stroke-width="1"/><path d="M529.5 238V256" stroke="#00ff00" stroke-width="1"/><rect x="527.5" y="239.5" width="4" height="4" fill="#000000" stroke="#00ff00" stroke-width="1"/><path d="M537.5 238V250" stroke="#00ff00" stroke-width="1"/><rect x="535.5" y="239.5" width="4" height="4" fill="#ffffff" stroke="#00ff00" stroke-width="1"/><path d="M545.5 233V244" stroke="#00ff00" stroke-width="1"/><rect x="543.5" y="240.5" width="4" height="3" fill="#000000" stroke="#00ff00" stroke-width="1"/><path d="M553.5 234V249" stroke="#00ff00" stroke-width="1"/><rect x="551.5" y="240.5" width="4" height="3" fill="#ffffff" stroke="#00ff00" stroke-width="1"/><path d="M561.5 231V249" stroke="#00ff00" stroke-width="1"/><rect x="559.5" y="233.5" width="4" height="9" fill="#000000" stroke="#00ff00" stroke-width="1"/><path d="M569.5 196V240" stroke="#00ff00" stroke-width="1"/><rect x="567.5" y="207.5" width="4" height="26" fill="#000000" stroke="#00ff00" stroke-width="1"/><path d="M577.5 190V216" stroke="#00ff00" stroke-width="1"/><rect x="575.5" y="205.5" width="4" height="3" fill="#ffffff" stroke="#00ff00" stroke-width="1"/><path d="M585.5 193V212" stroke="#00ff00" stroke-width="1"/><rect x="583.5" y="201.5" width="4" height="5" fill="#000000" stroke="#00ff00" stroke-width="1"/><path d="M593.5 199V206" stroke="#00ff00" stroke-width="1"/><rect x="591.5" y="201.5" width="4" height="4" fill="#ffffff" stroke="#00ff00" stroke-width="1"/><path d="M601.5 189V210" stroke="#00ff00" stroke-width="1"/><rect x="599.5" y="193.5" width="4" height="12" fill="#000000" stroke="#00ff00" stroke-width="1"/><path d="M609.5 184V206" stroke="#00ff00" stroke-width="1"/><rect x="607.5" y="193.5" width="4" height="4" fill="#ffffff" stroke="#00ff00" stroke-width="1"/><path d="M617.5 183V237" stroke="#00ff00" stroke-width="1"/><rect x="615.5" y="196.5" width="4" height="26" fill="#ffffff" stroke="#00ff00" stroke-width="1"/><path d="M625.5 201V224" stroke="#00ff00" stroke-width="1"/><rect x="623.5" y="206.5" width="4" height="17" fill="#000000" stroke="#00ff00" stroke-width="1"/><path d="M633.5 205V215" stroke="#00ff00" stroke-width="1"/><rect x="631.5" y="206.5" width="4" height="4" fill="#ffffff" stroke="#00ff00" stroke-width="1"/><path d="M641.5 206V216" stroke="#00ff00" stroke-width="1"/><rect x="639.5" y="209.5" width="4" height="2" fill="#ffffff" stroke="#00ff00" stroke-width="1"/><path d="M649.5 209V226" stroke="#00ff00" stroke-width="1"/><rect x="647.5" y="211.5" width="4" height="4" fill="#ffffff" stroke="#00ff00" stroke-width="1"/><path d="M657.5 212V276" stroke="#00ff00" stroke-width="1"/><rect x="655.5" y="215.5" width="4" height="60" fill="#ffffff" stroke="#00ff00" stroke-width="1"/><path d="M665.5 262V288" stroke="#00ff00" stroke-width="1"/><rect x="663.5" y="264.5" width="4" height="11" fill="#000000" stroke="#00ff00" stroke-width="1"/><path d="M673.5 256V268" stroke="#00ff00" stroke-width="1"/><rect x="671.5" y="259.5" width="4" height="5" fill="#000000" stroke="#00ff00" stroke-width="1"/><path d="M681.5 253V262" stroke="#00ff00" stroke-width="1"/><rect x="679.5" y="257.5" width="4" height="2" fill="#000000" stroke="#00ff00" stroke-width="1"/><path d="M689.5 254V261" stroke="#00ff00" stroke-width="1"/><rect x="687.5" y="258.5" width="4" height="3" fill="#000000" stroke="#00ff00" stroke-width="1"/><path d="M697.5 250V259" stroke="#00ff00" stroke-width="1"/><rect x="695.5" y="252.5" width="4" height="6" fill="#000000" stroke="#00ff00" stroke-width="1"/><path d="M705.5 246V256" stroke="#00ff00" stroke-width="1"/><rect x="703.5" y="248.5" width="4" height="5" fill="#000000" stroke="#00ff00" stroke-width="1"/><rect x="200.5" y="133.5" width="522" height="157" fill="none" stroke="#fff"/><path d="M722 156.5h4" stroke="#fff"/><path d="M722 189.5h4" stroke="#fff"/><path d="M722 222.5h4" stroke="#fff"/><path d="M722 255.5h4" stroke="#fff"/><path d="M722 288.5h4" stroke="#fff"/><path d="M201.5 290v5" stroke="#fff"/><path d="M265.5 290v5" stroke="#fff"/><path d="M329.5 290v5" stroke="#fff"/><path d="M393.5 290v5" stroke="#fff"/><path d="M457.5 290v5" stroke="#fff"/><path d="M521.5 290v5" stroke="#fff"/><path d="M585.5 290v5" stroke="#fff"/><path d="M649.5 290v5" stroke="#fff"/><path d="M713.5 290v5" stroke="#fff"/><rect x="723" y="242" width="43" height="12" fill="#fff"/></svg>
<div class="ct" style="left:205px;top:137px">EURUSD,H4&nbsp; 1.13100 1.13182 1.13059 1.13161</div>
<div class="ct" style="left:729px;top:151px">1.14260</div>
<div class="ct" style="left:729px;top:184px">1.13870</div>
<div class="ct" style="left:729px;top:217px">1.13470</div>
<div class="ct" style="left:729px;top:251px">1.13070</div>
<div class="ct" style="left:729px;top:284px">1.12680</div>
<div class="ct" style="left:727px;top:243px;color:#000">1.13161</div>
<div class="ct" style="left:203px;top:296px">3 Dec 2018</div>
<div class="ct" style="left:265px;top:296px">4 Dec 08:00</div>
<div class="ct" style="left:329px;top:296px">5 Dec 16:00</div>
<div class="ct" style="left:393px;top:296px">7 Dec 00:00</div>
<div class="ct" style="left:457px;top:296px">10 Dec 04:00</div>
<div class="ct" style="left:521px;top:296px">11 Dec 12:00</div>
<div class="ct" style="left:585px;top:296px">12 Dec 20:00</div>
<div class="ct" style="left:649px;top:296px">14 Dec 04:00</div>
<div class="a" style="left:775px;top:98px;width:577px;height:224px;background:linear-gradient(#e2eaf4 0px,#c5d3e5 31px,#d3deeb 32px,#dce6f1 100%);border:1px solid #303030;border-radius:3px 3px 0 0"></div>
<svg style="left:786px;top:110px;opacity:0.8" width="15" height="14"><rect x="0.5" y="0.5" width="10" height="8" fill="#fff" stroke="#5b8cd0"/><rect x="0.5" y="0.5" width="10" height="2" fill="#5b8cd0"/><rect x="4.5" y="5.5" width="10" height="8" fill="#fff" stroke="#5b8cd0"/><rect x="4.5" y="5.5" width="10" height="2" fill="#5b8cd0"/><path d="M6 11l2 2 2-3 2 2" stroke="#5b8cd0" fill="none"/></svg>
<div class="t" style="left:805px;top:113px;font-size:11px;letter-spacing:-0.2px;color:#8a9099">GBPUSD,H4</div>
<div class="a" style="left:1252px;top:108px;width:31px;height:18px;background:linear-gradient(#e4ebf4,#d6e0ec 50%,#c8d5e5 51%,#d8e3ef);border:1px solid #6d7f98;border-radius:2px"></div>
<div class="a" style="left:1286px;top:108px;width:31px;height:18px;background:linear-gradient(#e4ebf4,#d6e0ec 50%,#c8d5e5 51%,#d8e3ef);border:1px solid #6d7f98;border-radius:2px"></div>
<div class="a" style="left:1262px;top:117px;width:11px;height:4px;background:#fff;border:1px solid #3c4a5c;border-radius:1px"></div>
<div class="a" style="left:1296px;top:112px;width:11px;height:9px;background:#fff;border:1px solid #3c4a5c;border-radius:1px"></div>
<div class="a" style="left:1299px;top:115px;width:5px;height:3px;background:#3c4a5c"></div>
<div class="a" style="left:1320px;top:108px;width:32px;height:18px;background:linear-gradient(#e4ebf4,#d6e0ec 50%,#c8d5e5 51%,#d8e3ef);border:1px solid #6d7f98;border-radius:2px"></div>
<svg style="left:1330px;top:112px" width="12" height="10"><path d="M2 1L10 9M10 1L2 9" stroke="#3c2a20" stroke-width="3.6"/><path d="M2 1L10 9M10 1L2 9" stroke="#fff" stroke-width="2"/></svg>
<div class="a" style="left:784px;top:130px;width:558px;height:182px;background:#000"></div>
<svg style="left:784px;top:129px" width="558" height="183" viewBox="784 129 558 183"><path d="M820.5 135V291" stroke="#8c8c8c" stroke-dasharray="3 3"/><path d="M852.5 135V291" stroke="#8c8c8c" stroke-dasharray="3 3"/><path d="M884.5 135V291" stroke="#8c8c8c" stroke-dasharray="3 3"/><path d="M916.5 135V291" stroke="#8c8c8c" stroke-dasharray="3 3"/><path d="M948.5 135V291" stroke="#8c8c8c" stroke-dasharray="3 3"/><path d="M980.5 135V291" stroke="#8c8c8c" stroke-dasharray="3 3"/><path d="M1012.5 135V291" stroke="#8c8c8c" stroke-dasharray="3 3"/><path d="M1044.5 135V291" stroke="#8c8c8c" stroke-dasharray="3 3"/><path d="M1076.5 135V291" stroke="#8c8c8c" stroke-dasharray="3 3"/><path d="M1108.5 135V291" stroke="#8c8c8c" stroke-dasharray="3 3"/><path d="M1140.5 135V291" stroke="#8c8c8c" stroke-dasharray="3 3"/><path d="M1172.5 135V291" stroke="#8c8c8c" stroke-dasharray="3 3"/><path d="M1204.5 135V291" stroke="#8c8c8c" stroke-dasharray="3 3"/><path d="M1236.5 135V291" stroke="#8c8c8c" stroke-dasharray="3 3"/><path d="M1268.5 135V291" stroke="#8c8c8c" stroke-dasharray="3 3"/><path d="M1300.5 135V291" stroke="#8c8c8c" stroke-dasharray="3 3"/><path d="M788 156.5H1309" stroke="#8c8c8c" stroke-dasharray="3 3"/><path d="M788 189.5H1309" stroke="#8c8c8c" stroke-dasharray="3 3"/><path d="M788 222.5H1309" stroke="#8c8c8c" stroke-dasharray="3 3"/><path d="M788 255.5H1309" stroke="#8c8c8c" stroke-dasharray="3 3"/><path d="M788 288.5H1309" stroke="#8c8c8c" stroke-dasharray="3 3"/><path d="M788 252.5H1309" stroke="#c0c0c0"/><path d="M789.5 165V177" stroke="#3ce83c"/><path d="M788 175.5h1M790 175.5h1" stroke="#3ce83c"/><path d="M793.5 166V181" stroke="#3ce83c"/><path d="M792 174.5h1M794 173.5h1" stroke="#3ce83c"/><path d="M797.5 159V177" stroke="#3ce83c"/><path d="M796 172.5h1M798 175.5h1" stroke="#3ce83c"/><path d="M801.5 157V178" stroke="#3ce83c"/><path d="M800 165.5h1M802 172.5h1" stroke="#3ce83c"/><path d="M805.5 162V177" stroke="#3ce83c"/><path d="M804 177.5h1M806 169.5h1" stroke="#3ce83c"/><path d="M809.5 154V172" stroke="#3ce83c"/><path d="M808 158.5h1M810 158.5h1" stroke="#3ce83c"/><path d="M813.5 157V176" stroke="#3ce83c"/><path d="M812 171.5h1M814 170.5h1" stroke="#3ce83c"/><path d="M817.5 153V173" stroke="#3ce83c"/><path d="M816 172.5h1M818 170.5h1" stroke="#3ce83c"/><path d="M821.5 159V169" stroke="#3ce83c"/><path d="M820 161.5h1M822 160.5h1" stroke="#3ce83c"/><path d="M825.5 153V174" stroke="#3ce83c"/><path d="M824 158.5h1M826 157.5h1" stroke="#3ce83c"/><path d="M829.5 156V180" stroke="#3ce83c"/><path d="M828 173.5h1M830 177.5h1" stroke="#3ce83c"/><path d="M833.5 157V174" stroke="#3ce83c"/><path d="M832 172.5h1M834 161.5h1" stroke="#3ce83c"/><path d="M837.5 172V184" stroke="#3ce83c"/><path d="M836 182.5h1M838 176.5h1" stroke="#3ce83c"/><path d="M841.5 175V196" stroke="#3ce83c"/><path d="M840 184.5h1M842 191.5h1" stroke="#3ce83c"/><path d="M845.5 182V195" stroke="#3ce83c"/><path d="M844 183.5h1M846 183.5h1" stroke="#3ce83c"/><path d="M849.5 180V194" stroke="#3ce83c"/><path d="M848 192.5h1M850 184.5h1" stroke="#3ce83c"/><path d="M853.5 178V199" stroke="#3ce83c"/><path d="M852 185.5h1M854 190.5h1" stroke="#3ce83c"/><path d="M857.5 179V199" stroke="#3ce83c"/><path d="M856 193.5h1M858 179.5h1" stroke="#3ce83c"/><path d="M861.5 183V195" stroke="#3ce83c"/><path d="M860 187.5h1M862 188.5h1" stroke="#3ce83c"/><path d="M865.5 181V202" stroke="#3ce83c"/><path d="M864 192.5h1M866 186.5h1" stroke="#3ce83c"/><path d="M869.5 183V195" stroke="#3ce83c"/><path d="M868 190.5h1M870 195.5h1" stroke="#3ce83c"/><path d="M873.5 185V198" stroke="#3ce83c"/><path d="M872 190.5h1M874 192.5h1" stroke="#3ce83c"/><path d="M877.5 183V205" stroke="#3ce83c"/><path d="M876 186.5h1M878 189.5h1" stroke="#3ce83c"/><path d="M881.5 143V172" stroke="#3ce83c"/><path d="M880 162.5h1M882 146.5h1" stroke="#3ce83c"/><path d="M885.5 148V163" stroke="#3ce83c"/><path d="M884 161.5h1M886 161.5h1" stroke="#3ce83c"/><path d="M889.5 151V164" stroke="#3ce83c"/><path d="M888 152.5h1M890 163.5h1" stroke="#3ce83c"/><path d="M893.5 153V163" stroke="#3ce83c"/><path d="M892 157.5h1M894 161.5h1" stroke="#3ce83c"/><path d="M897.5 153V165" stroke="#3ce83c"/><path d="M896 162.5h1M898 156.5h1" stroke="#3ce83c"/><path d="M901.5 153V161" stroke="#3ce83c"/><path d="M900 158.5h1M902 158.5h1" stroke="#3ce83c"/><path d="M905.5 169V181" stroke="#3ce83c"/><path d="M904 179.5h1M906 172.5h1" stroke="#3ce83c"/><path d="M909.5 175V186" stroke="#3ce83c"/><path d="M908 183.5h1M910 185.5h1" stroke="#3ce83c"/><path d="M913.5 172V185" stroke="#3ce83c"/><path d="M912 181.5h1M914 179.5h1" stroke="#3ce83c"/><path d="M917.5 174V188" stroke="#3ce83c"/><path d="M916 176.5h1M918 181.5h1" stroke="#3ce83c"/><path d="M921.5 169V186" stroke="#3ce83c"/><path d="M920 175.5h1M922 181.5h1" stroke="#3ce83c"/><path d="M925.5 168V185" stroke="#3ce83c"/><path d="M924 179.5h1M926 177.5h1" stroke="#3ce83c"/><path d="M929.5 170V184" stroke="#3ce83c"/><path d="M928 172.5h1M930 179.5h1" stroke="#3ce83c"/><path d="M933.5 168V181" stroke="#3ce83c"/><path d="M932 176.5h1M934 170.5h1" stroke="#3ce83c"/><path d="M937.5 166V178" stroke="#3ce83c"/><path d="M936 177.5h1M938 174.5h1" stroke="#3ce83c"/><path d="M941.5 174V184" stroke="#3ce83c"/><path d="M940 175.5h1M942 183.5h1" stroke="#3ce83c"/><path d="M945.5 181V194" stroke="#3ce83c"/><path d="M944 183.5h1M946 185.5h1" stroke="#3ce83c"/><path d="M949.5 185V200" stroke="#3ce83c"/><path d="M948 195.5h1M950 194.5h1" stroke="#3ce83c"/><path d="M953.5 185V207" stroke="#3ce83c"/><path d="M952 197.5h1M954 199.5h1" stroke="#3ce83c"/><path d="M957.5 188V200" stroke="#3ce83c"/><path d="M956 194.5h1M958 192.5h1" stroke="#3ce83c"/><path d="M961.5 196V210" stroke="#3ce83c"/><path d="M960 198.5h1M962 197.5h1" stroke="#3ce83c"/><path d="M965.5 193V208" stroke="#3ce83c"/><path d="M964 204.5h1M966 204.5h1" stroke="#3ce83c"/><path d="M969.5 189V205" stroke="#3ce83c"/><path d="M968 198.5h1M970 201.5h1" stroke="#3ce83c"/><path d="M973.5 188V204" stroke="#3ce83c"/><path d="M972 194.5h1M974 192.5h1" stroke="#3ce83c"/><path d="M977.5 184V203" stroke="#3ce83c"/><path d="M976 191.5h1M978 201.5h1" stroke="#3ce83c"/><path d="M981.5 185V200" stroke="#3ce83c"/><path d="M980 186.5h1M982 193.5h1" stroke="#3ce83c"/><path d="M985.5 178V191" stroke="#3ce83c"/><path d="M984 181.5h1M986 188.5h1" stroke="#3ce83c"/><path d="M989.5 169V178" stroke="#3ce83c"/><path d="M988 172.5h1M990 172.5h1" stroke="#3ce83c"/><path d="M993.5 164V180" stroke="#3ce83c"/><path d="M992 170.5h1M994 172.5h1" stroke="#3ce83c"/><path d="M997.5 171V179" stroke="#3ce83c"/><path d="M996 177.5h1M998 174.5h1" stroke="#3ce83c"/><path d="M1001.5 166V182" stroke="#3ce83c"/><path d="M1000 180.5h1M1002 168.5h1" stroke="#3ce83c"/><path d="M1005.5 170V179" stroke="#3ce83c"/><path d="M1004 173.5h1M1006 171.5h1" stroke="#3ce83c"/><path d="M1009.5 170V189" stroke="#3ce83c"/><path d="M1008 172.5h1M1010 185.5h1" stroke="#3ce83c"/><path d="M1013.5 178V189" stroke="#3ce83c"/><path d="M1012 186.5h1M1014 180.5h1" stroke="#3ce83c"/><path d="M1017.5 182V198" stroke="#3ce83c"/><path d="M1016 185.5h1M1018 189.5h1" stroke="#3ce83c"/><path d="M1021.5 182V194" stroke="#3ce83c"/><path d="M1020 191.5h1M1022 191.5h1" stroke="#3ce83c"/><path d="M1025.5 185V200" stroke="#3ce83c"/><path d="M1024 196.5h1M1026 194.5h1" stroke="#3ce83c"/><path d="M1029.5 185V202" stroke="#3ce83c"/><path d="M1028 187.5h1M1030 191.5h1" stroke="#3ce83c"/><path d="M1033.5 186V197" stroke="#3ce83c"/><path d="M1032 188.5h1M1034 192.5h1" stroke="#3ce83c"/><path d="M1037.5 187V213" stroke="#3ce83c"/><path d="M1036 201.5h1M1038 192.5h1" stroke="#3ce83c"/><path d="M1041.5 189V215" stroke="#3ce83c"/><path d="M1040 196.5h1M1042 209.5h1" stroke="#3ce83c"/><path d="M1045.5 185V209" stroke="#3ce83c"/><path d="M1044 186.5h1M1046 204.5h1" stroke="#3ce83c"/><path d="M1049.5 189V205" stroke="#3ce83c"/><path d="M1048 203.5h1M1050 204.5h1" stroke="#3ce83c"/><path d="M1053.5 178V190" stroke="#3ce83c"/><path d="M1052 182.5h1M1054 184.5h1" stroke="#3ce83c"/><path d="M1057.5 191V211" stroke="#3ce83c"/><path d="M1056 203.5h1M1058 204.5h1" stroke="#3ce83c"/><path d="M1061.5 197V215" stroke="#3ce83c"/><path d="M1060 214.5h1M1062 209.5h1" stroke="#3ce83c"/><path d="M1065.5 197V218" stroke="#3ce83c"/><path d="M1064 203.5h1M1066 215.5h1" stroke="#3ce83c"/><path d="M1069.5 194V213" stroke="#3ce83c"/><path d="M1068 203.5h1M1070 205.5h1" stroke="#3ce83c"/><path d="M1073.5 195V212" stroke="#3ce83c"/><path d="M1072 207.5h1M1074 195.5h1" stroke="#3ce83c"/><path d="M1077.5 193V214" stroke="#3ce83c"/><path d="M1076 209.5h1M1078 207.5h1" stroke="#3ce83c"/><path d="M1081.5 189V203" stroke="#3ce83c"/><path d="M1080 196.5h1M1082 196.5h1" stroke="#3ce83c"/><path d="M1085.5 182V209" stroke="#3ce83c"/><path d="M1084 195.5h1M1086 187.5h1" stroke="#3ce83c"/><path d="M1089.5 196V218" stroke="#3ce83c"/><path d="M1088 208.5h1M1090 197.5h1" stroke="#3ce83c"/><path d="M1093.5 192V219" stroke="#3ce83c"/><path d="M1092 205.5h1M1094 209.5h1" stroke="#3ce83c"/><path d="M1097.5 205V233" stroke="#3ce83c"/><path d="M1096 218.5h1M1098 221.5h1" stroke="#3ce83c"/><path d="M1101.5 203V231" stroke="#3ce83c"/><path d="M1100 230.5h1M1102 228.5h1" stroke="#3ce83c"/><path d="M1105.5 195V212" stroke="#3ce83c"/><path d="M1104 198.5h1M1106 209.5h1" stroke="#3ce83c"/><path d="M1109.5 190V207" stroke="#3ce83c"/><path d="M1108 201.5h1M1110 191.5h1" stroke="#3ce83c"/><path d="M1113.5 200V209" stroke="#3ce83c"/><path d="M1112 203.5h1M1114 202.5h1" stroke="#3ce83c"/><path d="M1117.5 198V208" stroke="#3ce83c"/><path d="M1116 199.5h1M1118 203.5h1" stroke="#3ce83c"/><path d="M1121.5 204V215" stroke="#3ce83c"/><path d="M1120 214.5h1M1122 208.5h1" stroke="#3ce83c"/><path d="M1125.5 200V213" stroke="#3ce83c"/><path d="M1124 211.5h1M1126 209.5h1" stroke="#3ce83c"/><path d="M1129.5 195V212" stroke="#3ce83c"/><path d="M1128 197.5h1M1130 209.5h1" stroke="#3ce83c"/><path d="M1133.5 184V197" stroke="#3ce83c"/><path d="M1132 192.5h1M1134 196.5h1" stroke="#3ce83c"/><path d="M1137.5 185V203" stroke="#3ce83c"/><path d="M1136 198.5h1M1138 198.5h1" stroke="#3ce83c"/><path d="M1141.5 186V197" stroke="#3ce83c"/><path d="M1140 190.5h1M1142 195.5h1" stroke="#3ce83c"/><path d="M1145.5 186V205" stroke="#3ce83c"/><path d="M1144 204.5h1M1146 202.5h1" stroke="#3ce83c"/><path d="M1149.5 188V205" stroke="#3ce83c"/><path d="M1148 195.5h1M1150 201.5h1" stroke="#3ce83c"/><path d="M1153.5 184V200" stroke="#3ce83c"/><path d="M1152 192.5h1M1154 186.5h1" stroke="#3ce83c"/><path d="M1157.5 186V204" stroke="#3ce83c"/><path d="M1156 186.5h1M1158 187.5h1" stroke="#3ce83c"/><path d="M1161.5 188V204" stroke="#3ce83c"/><path d="M1160 191.5h1M1162 191.5h1" stroke="#3ce83c"/><path d="M1165.5 191V206" stroke="#3ce83c"/><path d="M1164 199.5h1M1166 202.5h1" stroke="#3ce83c"/><path d="M1169.5 195V216" stroke="#3ce83c"/><path d="M1168 206.5h1M1170 204.5h1" stroke="#3ce83c"/><path d="M1173.5 197V217" stroke="#3ce83c"/><path d="M1172 210.5h1M1174 203.5h1" stroke="#3ce83c"/><path d="M1177.5 197V208" stroke="#3ce83c"/><path d="M1176 202.5h1M1178 205.5h1" stroke="#3ce83c"/><path d="M1181.5 198V222" stroke="#3ce83c"/><path d="M1180 208.5h1M1182 203.5h1" stroke="#3ce83c"/><path d="M1185.5 229V261" stroke="#3ce83c"/><path d="M1184 258.5h1M1186 252.5h1" stroke="#3ce83c"/><path d="M1189.5 246V275" stroke="#3ce83c"/><path d="M1188 257.5h1M1190 257.5h1" stroke="#3ce83c"/><path d="M1193.5 249V270" stroke="#3ce83c"/><path d="M1192 260.5h1M1194 261.5h1" stroke="#3ce83c"/><path d="M1197.5 251V259" stroke="#3ce83c"/><path d="M1196 253.5h1M1198 251.5h1" stroke="#3ce83c"/><path d="M1201.5 252V259" stroke="#3ce83c"/><path d="M1200 253.5h1M1202 258.5h1" stroke="#3ce83c"/><path d="M1205.5 235V261" stroke="#3ce83c"/><path d="M1204 239.5h1M1206 247.5h1" stroke="#3ce83c"/><path d="M1209.5 252V281" stroke="#3ce83c"/><path d="M1208 258.5h1M1210 258.5h1" stroke="#3ce83c"/><path d="M1213.5 274V285" stroke="#3ce83c"/><path d="M1212 276.5h1M1214 279.5h1" stroke="#3ce83c"/><path d="M1217.5 270V292" stroke="#3ce83c"/><path d="M1216 273.5h1M1218 270.5h1" stroke="#3ce83c"/><path d="M1221.5 271V296" stroke="#3ce83c"/><path d="M1220 274.5h1M1222 275.5h1" stroke="#3ce83c"/><path d="M1225.5 265V284" stroke="#3ce83c"/><path d="M1224 274.5h1M1226 266.5h1" stroke="#3ce83c"/><path d="M1229.5 270V284" stroke="#3ce83c"/><path d="M1228 270.5h1M1230 276.5h1" stroke="#3ce83c"/><path d="M1233.5 251V269" stroke="#3ce83c"/><path d="M1232 259.5h1M1234 264.5h1" stroke="#3ce83c"/><path d="M1237.5 223V242" stroke="#3ce83c"/><path d="M1236 224.5h1M1238 231.5h1" stroke="#3ce83c"/><path d="M1241.5 230V242" stroke="#3ce83c"/><path d="M1240 235.5h1M1242 231.5h1" stroke="#3ce83c"/><path d="M1245.5 236V250" stroke="#3ce83c"/><path d="M1244 250.5h1M1246 239.5h1" stroke="#3ce83c"/><path d="M1249.5 223V242" stroke="#3ce83c"/><path d="M1248 225.5h1M1250 232.5h1" stroke="#3ce83c"/><path d="M1253.5 225V243" stroke="#3ce83c"/><path d="M1252 228.5h1M1254 236.5h1" stroke="#3ce83c"/><path d="M1257.5 221V246" stroke="#3ce83c"/><path d="M1256 230.5h1M1258 224.5h1" stroke="#3ce83c"/><path d="M1261.5 213V235" stroke="#3ce83c"/><path d="M1260 214.5h1M1262 229.5h1" stroke="#3ce83c"/><path d="M1265.5 220V238" stroke="#3ce83c"/><path d="M1264 225.5h1M1266 234.5h1" stroke="#3ce83c"/><path d="M1269.5 226V239" stroke="#3ce83c"/><path d="M1268 232.5h1M1270 238.5h1" stroke="#3ce83c"/><path d="M1273.5 238V251" stroke="#3ce83c"/><path d="M1272 242.5h1M1274 241.5h1" stroke="#3ce83c"/><path d="M1277.5 244V273" stroke="#3ce83c"/><path d="M1276 252.5h1M1278 267.5h1" stroke="#3ce83c"/><path d="M1281.5 247V264" stroke="#3ce83c"/><path d="M1280 257.5h1M1282 253.5h1" stroke="#3ce83c"/><path d="M1285.5 248V258" stroke="#3ce83c"/><path d="M1284 249.5h1M1286 255.5h1" stroke="#3ce83c"/><path d="M1289.5 244V256" stroke="#3ce83c"/><path d="M1288 255.5h1M1290 251.5h1" stroke="#3ce83c"/><path d="M1293.5 245V256" stroke="#3ce83c"/><path d="M1292 245.5h1M1294 246.5h1" stroke="#3ce83c"/><path d="M1297.5 248V257" stroke="#3ce83c"/><path d="M1296 249.5h1M1298 249.5h1" stroke="#3ce83c"/><path d="M1301.5 245V259" stroke="#3ce83c"/><path d="M1300 246.5h1M1302 246.5h1" stroke="#3ce83c"/><path d="M789.0 159.5 C792.2 162.7 800.6 177.1 808.0 178.6 C815.4 180.1 825.5 169.0 833.6 168.4 C841.7 167.8 849.4 172.5 856.6 174.8 C863.8 177.1 869.8 182.4 877.0 182.4 C884.2 182.4 890.7 176.9 900.0 174.8 C909.3 172.7 924.1 169.3 933.0 169.7 C941.9 170.1 945.8 174.1 953.5 177.3 C961.2 180.5 971.2 186.4 979.0 188.8 C986.8 191.2 994.8 191.9 1000.0 192.0 C1005.2 192.1 1005.2 190.3 1010.3 189.3 C1015.4 188.3 1024.3 185.9 1030.7 186.2 C1037.1 186.4 1040.9 188.7 1048.6 190.8 C1056.2 192.9 1066.8 197.0 1076.6 199.0 C1086.4 201.0 1099.1 201.7 1107.2 202.8 C1115.3 203.9 1117.4 206.0 1125.0 205.4 C1132.6 204.8 1144.0 200.1 1153.0 199.0 C1162.0 197.9 1172.8 196.7 1179.0 199.0 C1185.2 201.3 1186.5 208.1 1190.5 213.0 C1194.5 217.9 1198.8 223.0 1203.0 228.3 C1207.2 233.6 1210.8 239.6 1216.0 245.0 C1221.2 250.4 1228.5 259.5 1234.0 261.0 C1239.5 262.5 1243.5 256.1 1249.0 253.8 C1254.5 251.5 1261.2 249.5 1267.0 247.0 C1272.8 244.5 1278.1 239.6 1283.6 239.0 C1289.1 238.4 1297.3 242.8 1300.0 243.6" stroke="#d02a2a" stroke-width="1" fill="none"/><rect x="787.5" y="133.5" width="522" height="158" fill="none" stroke="#fff"/><path d="M1309 156.5h4" stroke="#fff"/><path d="M1309 189.5h4" stroke="#fff"/><path d="M1309 222.5h4" stroke="#fff"/><path d="M1309 255.5h4" stroke="#fff"/><path d="M1309 288.5h4" stroke="#fff"/><path d="M788.5 292v3" stroke="#fff"/><path d="M852.5 292v3" stroke="#fff"/><path d="M916.5 292v3" stroke="#fff"/><path d="M980.5 292v3" stroke="#fff"/><path d="M1044.5 292v3" stroke="#fff"/><path d="M1108.5 292v3" stroke="#fff"/><path d="M1172.5 292v3" stroke="#fff"/><path d="M1236.5 292v3" stroke="#fff"/><path d="M1300.5 292v3" stroke="#fff"/><rect x="1310" y="246" width="32" height="12" fill="#fff"/></svg>
<div class="ct" style="left:792px;top:137px">GBPUSD,H4&nbsp; 1.25799 1.25956 1.25750 1.25825</div>
<div class="ct" style="left:1315px;top:151px">1.2882</div>
<div class="ct" style="left:1315px;top:184px">1.2780</div>
<div class="ct" style="left:1315px;top:217px">1.2678</div>
<div class="ct" style="left:1315px;top:282px">1.2474</div>
<div class="ct" style="left:1313px;top:247px;color:#000">1.2582</div>
<div class="ct" style="left:788px;top:296px">16 Nov 2018</div>
<div class="ct" style="left:852px;top:296px">21 Nov 04:00</div>
<div class="ct" style="left:916px;top:296px">23 Nov 20:00</div>
<div class="ct" style="left:980px;top:296px">28 Nov 08:00</div>
<div class="ct" style="left:1044px;top:296px">2 Dec 22:00</div>
<div class="ct" style="left:1108px;top:296px">5 Dec 12:00</div>
<div class="ct" style="left:1172px;top:296px">10 Dec 00:00</div>
<div class="ct" style="left:1236px;top:296px">12 Dec 16:00</div>
<div class="ct" style="left:1300px;top:296px">17 Dec 04:00</div>
<div class="a" style="left:775px;top:322px;width:577px;height:225px;background:linear-gradient(#e2eaf4 0px,#c5d3e5 31px,#d3deeb 32px,#dce6f1 100%);border:1px solid #303030;border-radius:3px 3px 0 0"></div>
<div class="t" style="left:805px;top:336px;font-size:11px;letter-spacing:-0.2px;color:#8a9099">USDJPY,H4</div>
<div class="a" style="left:1252px;top:333px;width:31px;height:18px;background:linear-gradient(#e4ebf4,#d6e0ec 50%,#c8d5e5 51%,#d8e3ef);border:1px solid #6d7f98;border-radius:2px"></div>
<div class="a" style="left:1286px;top:333px;width:31px;height:18px;background:linear-gradient(#e4ebf4,#d6e0ec 50%,#c8d5e5 51%,#d8e3ef);border:1px solid #6d7f98;border-radius:2px"></div>
<div class="a" style="left:1262px;top:342px;width:11px;height:4px;background:#fff;border:1px solid #3c4a5c;border-radius:1px"></div>
<div class="a" style="left:1296px;top:337px;width:11px;height:9px;background:#fff;border:1px solid #3c4a5c;border-radius:1px"></div>
<div class="a" style="left:1299px;top:340px;width:5px;height:3px;background:#3c4a5c"></div>
<div class="a" style="left:1320px;top:333px;width:32px;height:18px;background:linear-gradient(#e4ebf4,#d6e0ec 50%,#c8d5e5 51%,#d8e3ef);border:1px solid #6d7f98;border-radius:2px"></div>
<svg style="left:1330px;top:337px" width="12" height="10"><path d="M2 1L10 9M10 1L2 9" stroke="#3c2a20" stroke-width="3.6"/><path d="M2 1L10 9M10 1L2 9" stroke="#fff" stroke-width="2"/></svg>
<div class="a" style="left:835px;top:353px;width:507px;height:183px;background:#000"></div>
<svg style="left:835px;top:353px" width="507" height="181" viewBox="835 353 507 181"><path d="M852.5 358V461" stroke="#8c8c8c" stroke-dasharray="3 3"/><path d="M884.5 358V461" stroke="#8c8c8c" stroke-dasharray="3 3"/><path d="M916.5 358V461" stroke="#8c8c8c" stroke-dasharray="3 3"/><path d="M948.5 358V461" stroke="#8c8c8c" stroke-dasharray="3 3"/><path d="M980.5 358V461" stroke="#8c8c8c" stroke-dasharray="3 3"/><path d="M1012.5 358V461" stroke="#8c8c8c" stroke-dasharray="3 3"/><path d="M1044.5 358V461" stroke="#8c8c8c" stroke-dasharray="3 3"/><path d="M1076.5 358V461" stroke="#8c8c8c" stroke-dasharray="3 3"/><path d="M1108.5 358V461" stroke="#8c8c8c" stroke-dasharray="3 3"/><path d="M1140.5 358V461" stroke="#8c8c8c" stroke-dasharray="3 3"/><path d="M1172.5 358V461" stroke="#8c8c8c" stroke-dasharray="3 3"/><path d="M1204.5 358V461" stroke="#8c8c8c" stroke-dasharray="3 3"/><path d="M1236.5 358V461" stroke="#8c8c8c" stroke-dasharray="3 3"/><path d="M1268.5 358V461" stroke="#8c8c8c" stroke-dasharray="3 3"/><path d="M1300.5 358V461" stroke="#8c8c8c" stroke-dasharray="3 3"/><path d="M835 389.5H1309" stroke="#8c8c8c" stroke-dasharray="3 3"/><path d="M835 426.5H1309" stroke="#8c8c8c" stroke-dasharray="3 3"/><path d="M835 457.5H1309" stroke="#8c8c8c" stroke-dasharray="3 3"/><path d="M852.5 465V514" stroke="#8c8c8c" stroke-dasharray="3 3"/><path d="M884.5 465V514" stroke="#8c8c8c" stroke-dasharray="3 3"/><path d="M916.5 465V514" stroke="#8c8c8c" stroke-dasharray="3 3"/><path d="M948.5 465V514" stroke="#8c8c8c" stroke-dasharray="3 3"/><path d="M980.5 465V514" stroke="#8c8c8c" stroke-dasharray="3 3"/><path d="M1012.5 465V514" stroke="#8c8c8c" stroke-dasharray="3 3"/><path d="M1044.5 465V514" stroke="#8c8c8c" stroke-dasharray="3 3"/><path d="M1076.5 465V514" stroke="#8c8c8c" stroke-dasharray="3 3"/><path d="M1108.5 465V514" stroke="#8c8c8c" stroke-dasharray="3 3"/><path d="M1140.5 465V514" stroke="#8c8c8c" stroke-dasharray="3 3"/><path d="M1172.5 465V514" stroke="#8c8c8c" stroke-dasharray="3 3"/><path d="M1204.5 465V514" stroke="#8c8c8c" stroke-dasharray="3 3"/><path d="M1236.5 465V514" stroke="#8c8c8c" stroke-dasharray="3 3"/><path d="M1268.5 465V514" stroke="#8c8c8c" stroke-dasharray="3 3"/><path d="M1300.5 465V514" stroke="#8c8c8c" stroke-dasharray="3 3"/><path d="M835 478.5H1309" stroke="#8c8c8c" stroke-dasharray="3 3"/><path d="M835 487.5H1309" stroke="#8c8c8c" stroke-dasharray="3 3"/><path d="M835 496.5H1309" stroke="#8c8c8c" stroke-dasharray="3 3"/><path d="M835 388.5H1309" stroke="#c0c0c0"/><path d="M844.5 391V409" stroke="#00ff00" stroke-width="1"/><rect x="842.5" y="393.5" width="4" height="13" fill="#ffffff" stroke="#00ff00" stroke-width="1"/><path d="M852.5 404V427" stroke="#00ff00" stroke-width="1"/><rect x="850.5" y="405.5" width="4" height="21" fill="#ffffff" stroke="#00ff00" stroke-width="1"/><path d="M860.5 411V428" stroke="#00ff00" stroke-width="1"/><rect x="858.5" y="411.5" width="4" height="16" fill="#000000" stroke="#00ff00" stroke-width="1"/><path d="M868.5 411V438" stroke="#00ff00" stroke-width="1"/><rect x="866.5" y="412.5" width="4" height="12" fill="#ffffff" stroke="#00ff00" stroke-width="1"/><path d="M876.5 420V433" stroke="#00ff00" stroke-width="1"/><rect x="874.5" y="424.5" width="4" height="7" fill="#ffffff" stroke="#00ff00" stroke-width="1"/><path d="M884.5 411V432" stroke="#00ff00" stroke-width="1"/><rect x="882.5" y="418.5" width="4" height="13" fill="#000000" stroke="#00ff00" stroke-width="1"/><path d="M892.5 406V418" stroke="#00ff00" stroke-width="1"/><rect x="890.5" y="407.5" width="4" height="10" fill="#000000" stroke="#00ff00" stroke-width="1"/><path d="M900.5 406V416" stroke="#00ff00" stroke-width="1"/><rect x="898.5" y="407.5" width="4" height="8" fill="#ffffff" stroke="#00ff00" stroke-width="1"/><path d="M908.5 399V415" stroke="#00ff00" stroke-width="1"/><rect x="906.5" y="403.5" width="4" height="12" fill="#000000" stroke="#00ff00" stroke-width="1"/><path d="M916.5 399V405" stroke="#00ff00" stroke-width="1"/><rect x="914.5" y="401.5" width="4" height="2" fill="#ffffff" stroke="#00ff00" stroke-width="1"/><path d="M924.5 399V414" stroke="#00ff00" stroke-width="1"/><rect x="922.5" y="401.5" width="4" height="8" fill="#ffffff" stroke="#00ff00" stroke-width="1"/><path d="M932.5 407V432" stroke="#00ff00" stroke-width="1"/><rect x="930.5" y="409.5" width="4" height="20" fill="#ffffff" stroke="#00ff00" stroke-width="1"/><path d="M940.5 402V437" stroke="#00ff00" stroke-width="1"/><rect x="938.5" y="407.5" width="4" height="21" fill="#000000" stroke="#00ff00" stroke-width="1"/><path d="M948.5 404V437" stroke="#00ff00" stroke-width="1"/><rect x="946.5" y="407.5" width="4" height="18" fill="#ffffff" stroke="#00ff00" stroke-width="1"/><path d="M956.5 422V459" stroke="#00ff00" stroke-width="1"/><rect x="954.5" y="425.5" width="4" height="25" fill="#ffffff" stroke="#00ff00" stroke-width="1"/><path d="M964.5 432V459" stroke="#00ff00" stroke-width="1"/><rect x="962.5" y="434.5" width="4" height="16" fill="#000000" stroke="#00ff00" stroke-width="1"/><path d="M972.5 427V437" stroke="#00ff00" stroke-width="1"/><rect x="970.5" y="429.5" width="4" height="6" fill="#000000" stroke="#00ff00" stroke-width="1"/><path d="M980.5 422V433" stroke="#00ff00" stroke-width="1"/><rect x="978.5" y="424.5" width="4" height="5" fill="#000000" stroke="#00ff00" stroke-width="1"/><path d="M988.5 417V427" stroke="#00ff00" stroke-width="1"/><rect x="986.5" y="424.5" width="4" height="2" fill="#ffffff" stroke="#00ff00" stroke-width="1"/><path d="M996.5 420V428" stroke="#00ff00" stroke-width="1"/><path d="M994 426.5h5" stroke="#00ff00" stroke-width="1"/><path d="M1004.5 417V435" stroke="#00ff00" stroke-width="1"/><rect x="1002.5" y="426.5" width="4" height="5" fill="#ffffff" stroke="#00ff00" stroke-width="1"/><path d="M1013.5 427V437" stroke="#00ff00" stroke-width="1"/><rect x="1011.5" y="431.5" width="4" height="3" fill="#ffffff" stroke="#00ff00" stroke-width="1"/><path d="M1021.5 428V437" stroke="#00ff00" stroke-width="1"/><rect x="1019.5" y="428.5" width="4" height="7" fill="#000000" stroke="#00ff00" stroke-width="1"/><path d="M1029.5 432V447" stroke="#00ff00" stroke-width="1"/><rect x="1027.5" y="436.5" width="4" height="5" fill="#ffffff" stroke="#00ff00" stroke-width="1"/><path d="M1037.5 437V459" stroke="#00ff00" stroke-width="1"/><rect x="1035.5" y="441.5" width="4" height="10" fill="#ffffff" stroke="#00ff00" stroke-width="1"/><path d="M1045.5 433V455" stroke="#00ff00" stroke-width="1"/><rect x="1043.5" y="434.5" width="4" height="19" fill="#000000" stroke="#00ff00" stroke-width="1"/><path d="M1053.5 427V435" stroke="#00ff00" stroke-width="1"/><path d="M1051 434.5h5" stroke="#00ff00" stroke-width="1"/><path d="M1061.5 408V437" stroke="#00ff00" stroke-width="1"/><rect x="1059.5" y="413.5" width="4" height="20" fill="#000000" stroke="#00ff00" stroke-width="1"/><path d="M1069.5 393V421" stroke="#00ff00" stroke-width="1"/><rect x="1067.5" y="400.5" width="4" height="13" fill="#000000" stroke="#00ff00" stroke-width="1"/><path d="M1077.5 389V402" stroke="#00ff00" stroke-width="1"/><path d="M1075 400.5h5" stroke="#00ff00" stroke-width="1"/><path d="M1085.5 398V412" stroke="#00ff00" stroke-width="1"/><rect x="1083.5" y="400.5" width="4" height="10" fill="#ffffff" stroke="#00ff00" stroke-width="1"/><path d="M1093.5 402V412" stroke="#00ff00" stroke-width="1"/><rect x="1091.5" y="405.5" width="4" height="5" fill="#000000" stroke="#00ff00" stroke-width="1"/><path d="M1101.5 401V411" stroke="#00ff00" stroke-width="1"/><rect x="1099.5" y="403.5" width="4" height="4" fill="#000000" stroke="#00ff00" stroke-width="1"/><path d="M1109.5 388V406" stroke="#00ff00" stroke-width="1"/><rect x="1107.5" y="390.5" width="4" height="13" fill="#000000" stroke="#00ff00" stroke-width="1"/><path d="M1117.5 383V398" stroke="#00ff00" stroke-width="1"/><rect x="1115.5" y="387.5" width="4" height="3" fill="#000000" stroke="#00ff00" stroke-width="1"/><path d="M1125.5 385V390" stroke="#00ff00" stroke-width="1"/><rect x="1123.5" y="387.5" width="4" height="2" fill="#ffffff" stroke="#00ff00" stroke-width="1"/><path d="M1133.5 380V393" stroke="#00ff00" stroke-width="1"/><rect x="1131.5" y="383.5" width="4" height="6" fill="#000000" stroke="#00ff00" stroke-width="1"/><path d="M1141.5 381V388" stroke="#00ff00" stroke-width="1"/><rect x="1139.5" y="383.5" width="4" height="4" fill="#ffffff" stroke="#00ff00" stroke-width="1"/><path d="M1149.5 381V388" stroke="#00ff00" stroke-width="1"/><path d="M1147 387.5h5" stroke="#00ff00" stroke-width="1"/><path d="M1157.5 386V402" stroke="#00ff00" stroke-width="1"/><rect x="1155.5" y="387.5" width="4" height="11" fill="#ffffff" stroke="#00ff00" stroke-width="1"/><path d="M1166.5 394V404" stroke="#00ff00" stroke-width="1"/><path d="M1164 399.5h5" stroke="#00ff00" stroke-width="1"/><path d="M1174.5 392V401" stroke="#00ff00" stroke-width="1"/><rect x="1172.5" y="394.5" width="4" height="6" fill="#000000" stroke="#00ff00" stroke-width="1"/><path d="M1182.5 381V395" stroke="#00ff00" stroke-width="1"/><rect x="1180.5" y="384.5" width="4" height="10" fill="#000000" stroke="#00ff00" stroke-width="1"/><path d="M1190.5 381V389" stroke="#00ff00" stroke-width="1"/><rect x="1188.5" y="384.5" width="4" height="4" fill="#ffffff" stroke="#00ff00" stroke-width="1"/><path d="M1198.5 381V389" stroke="#00ff00" stroke-width="1"/><rect x="1196.5" y="385.5" width="4" height="3" fill="#000000" stroke="#00ff00" stroke-width="1"/><path d="M1206.5 372V387" stroke="#00ff00" stroke-width="1"/><rect x="1204.5" y="373.5" width="4" height="12" fill="#000000" stroke="#00ff00" stroke-width="1"/><path d="M1214.5 368V378" stroke="#00ff00" stroke-width="1"/><rect x="1212.5" y="373.5" width="4" height="3" fill="#ffffff" stroke="#00ff00" stroke-width="1"/><path d="M1222.5 373V378" stroke="#00ff00" stroke-width="1"/><rect x="1220.5" y="375.5" width="4" height="2" fill="#ffffff" stroke="#00ff00" stroke-width="1"/><path d="M1230.5 372V386" stroke="#00ff00" stroke-width="1"/><rect x="1228.5" y="376.5" width="4" height="5" fill="#ffffff" stroke="#00ff00" stroke-width="1"/><path d="M1238.5 375V385" stroke="#00ff00" stroke-width="1"/><rect x="1236.5" y="377.5" width="4" height="4" fill="#000000" stroke="#00ff00" stroke-width="1"/><path d="M1246.5 373V383" stroke="#00ff00" stroke-width="1"/><rect x="1244.5" y="375.5" width="4" height="3" fill="#000000" stroke="#00ff00" stroke-width="1"/><path d="M1254.5 371V388" stroke="#00ff00" stroke-width="1"/><rect x="1252.5" y="375.5" width="4" height="12" fill="#ffffff" stroke="#00ff00" stroke-width="1"/><path d="M1262.5 383V400" stroke="#00ff00" stroke-width="1"/><rect x="1260.5" y="387.5" width="4" height="7" fill="#ffffff" stroke="#00ff00" stroke-width="1"/><path d="M1270.5 386V396" stroke="#00ff00" stroke-width="1"/><rect x="1268.5" y="389.5" width="4" height="5" fill="#000000" stroke="#00ff00" stroke-width="1"/><path d="M1278.5 386V393" stroke="#00ff00" stroke-width="1"/><rect x="1276.5" y="388.5" width="4" height="3" fill="#000000" stroke="#00ff00" stroke-width="1"/><path d="M1286.5 381V392" stroke="#00ff00" stroke-width="1"/><rect x="1284.5" y="382.5" width="4" height="6" fill="#000000" stroke="#00ff00" stroke-width="1"/><path d="M1294.5 380V389" stroke="#00ff00" stroke-width="1"/><rect x="1292.5" y="382.5" width="4" height="6" fill="#ffffff" stroke="#00ff00" stroke-width="1"/><path d="M841.4808813998703 504.5657809462087 L851.202203499676 512.0187945560597 L860.9235255994815 502.9455605962411 L877.1257290991575 499.0570317563189 L891.7077122488658 491.6040181464679 L916.0110174983798 486.09526895657814 L932.2132209980557 493.8723266364226 L940.3143227478937 489.9837977965003 L948.4154244977317 493.22423849643553 L956.5165262475697 506.83408943616337 L964.6176279974077 501.3253402462735 L980.8198314970837 491.6040181464679 L997.0220349967595 489.9837977965003 L1013.2242384964355 492.57615035644847 L1019.7051198963059 491.6040181464679 L1029.4264419961114 498.0848995463383 L1035.9073233959818 501.3253402462735 L1045.6286454957874 492.57615035644847 L1061.8308489954634 477.02203499675954 L1068.3117303953338 468.92093324692155 L1076.4128321451717 467.300712896954 L1085.0 477.02203499675954 L1100.2300712896954 480.26247569669476 L1108.3311730395333 477.02203499675954 L1117.404406999352 476.37394685677253 L1133.606610499028 477.6701231367466 L1148.8366817887234 478.64225534672715 L1164.3907971484123 486.74335709656515 L1172.4918988982502 488.36357744653276 L1180.593000648088 480.26247569669476 L1196.795204147764 479.6143875567077 L1212.349319507453 471.1892417368762 L1227.5793907971483 479.6143875567077 L1243.7815942968243 480.26247569669476 L1259.9837977965003 493.8723266364226 L1276.1860012961763 492.57615035644847 L1292.3882047958523 489.9837977965003" stroke="#4aa8a8" stroke-width="1" fill="none"/><path d="M835 357.5H1309.5V461.5H835M835 464.5H1309.5V515.5H835" fill="none" stroke="#fff"/><path d="M1309 389.5h4" stroke="#fff"/><path d="M1309 426.5h4" stroke="#fff"/><path d="M1309 457.5h4" stroke="#fff"/><path d="M852.5 516v4" stroke="#fff"/><path d="M916.5 516v4" stroke="#fff"/><path d="M980.5 516v4" stroke="#fff"/><path d="M1044.5 516v4" stroke="#fff"/><path d="M1108.5 516v4" stroke="#fff"/><path d="M1172.5 516v4" stroke="#fff"/><path d="M1236.5 516v4" stroke="#fff"/><path d="M1300.5 516v4" stroke="#fff"/><rect x="1311" y="383" width="31" height="11" fill="#fff"/></svg>
<div class="ct" style="left:849px;top:360px">113.475 113.518 113.388 113.388</div>
<div class="ct" style="left:845px;top:467px">.1188</div>
<div class="ct" style="left:1315px;top:355px">113.84</div>
<div class="ct" style="left:1315px;top:389px">113.38</div>
<div class="ct" style="left:1315px;top:422px">112.76</div>
<div class="ct" style="left:1315px;top:454px">112.23</div>
<div class="ct" style="left:1313px;top:384px;color:#000">113.38</div>
<div class="ct" style="left:1314px;top:467px">239.26</div>
<div class="ct" style="left:1314px;top:473px">100</div>
<div class="ct" style="left:1314px;top:483px">0.00</div>
<div class="ct" style="left:1314px;top:492px">-100</div>
<div class="ct" style="left:1314px;top:503px">-305.90</div>
<div class="ct" style="left:851px;top:520px">4 Dec 08:00</div>
<div class="ct" style="left:916px;top:520px">5 Dec 16:00</div>
<div class="ct" style="left:980px;top:520px">7 Dec 00:00</div>
<div class="ct" style="left:1044px;top:520px">10 Dec 04:00</div>
<div class="ct" style="left:1108px;top:520px">11 Dec 12:00</div>
<div class="ct" style="left:1172px;top:520px">12 Dec 20:00</div>
<div class="ct" style="left:1236px;top:520px">14 Dec 04:00</div><div class="a" style="left:187px;top:546px;width:1155px;height:1px;background:#404040"></div>
<div class="a" style="left:187px;top:547px;width:1155px;height:1px;background:#ffffff"></div>
<div class="a" style="left:187px;top:548px;width:1155px;height:1px;background:#101010"></div>
<div class="a" style="left:187px;top:549px;width:1155px;height:20px;background:#f0f0f0"></div>
<svg style="left:1331px;top:554px" width="6" height="8"><path d="M5 0L0 4L5 8z" fill="#808080"/></svg>
<div class="a" style="left:187px;top:568px;width:1155px;height:1px;background:#fff"></div>
<div class="a" style="left:0px;top:572px;width:14px;height:131px;background:#f0f0f0"></div>
<div class="t" style="left:3px;top:572px;font-size:12px;font-weight:bold">&#215;</div>
<div class="a" style="left:0px;top:586px;width:12px;height:114px;background:#c2d8ef"></div>
<div class="t" style="left:-28px;top:657px;width:70px;font-size:12px;transform:rotate(-90deg);text-align:left;color:#000">Terminal</div>
<div class="a" style="left:14px;top:572px;width:1328px;height:107px;background:#fff;border-top:1px solid #a0a0a0;border-left:1px solid #a0a0a0;border-bottom:1px solid #000"></div>
<div class="t" style="left:22px;top:579px;font-size:12px">Headline</div>
<div class="t" style="right:4px;top:579px;font-size:12px">Time</div>
<div class="a" style="left:1212px;top:573px;width:1px;height:24px;background:#e6e6e6"></div>
<div class="a" style="left:15px;top:596px;width:1327px;height:1px;background:#dadada"></div>
<div class="a" style="left:15px;top:597px;width:1327px;height:20px;background:#e8e8e8;border-bottom:1px solid #d6d6d6"></div>
<div class="a" style="left:1211px;top:597px;width:1px;height:20px;background:#d0d0d0"></div>
<svg style="left:16px;top:601px" width="14" height="11"><rect x="0.5" y="0.5" width="13" height="10" fill="#f8e8a8" stroke="#a89050"/><path d="M1 1l6 5 6-5" stroke="#a89050" fill="none"/></svg>
<div class="t" style="right:3px;top:601px;font-size:12.3px;font-weight:bold">2018.12.17 09:41</div>
<div class="t" style="left:836px;top:601px;font-size:12.3px;font-weight:bold">n</div>
<div class="a" style="left:15px;top:617px;width:1327px;height:20px;background:#ffffff;border-bottom:1px solid #d6d6d6"></div>
<div class="a" style="left:1211px;top:617px;width:1px;height:20px;background:#d0d0d0"></div>
<svg style="left:16px;top:621px" width="14" height="11"><rect x="0.5" y="0.5" width="13" height="10" fill="#f8e8a8" stroke="#a89050"/><path d="M1 1l6 5 6-5" stroke="#a89050" fill="none"/></svg>
<div class="t" style="right:3px;top:621px;font-size:12.3px;font-weight:bold">2018.12.17 09:41</div>
<div class="t" style="left:836px;top:621px;font-size:12.3px;font-weight:bold">n</div>
<div class="a" style="left:15px;top:637px;width:1327px;height:20px;background:#e8e8e8;border-bottom:1px solid #d6d6d6"></div>
<div class="a" style="left:1211px;top:637px;width:1px;height:20px;background:#d0d0d0"></div>
<svg style="left:16px;top:641px" width="14" height="11"><rect x="0.5" y="0.5" width="13" height="10" fill="#f8e8a8" stroke="#a89050"/><path d="M1 1l6 5 6-5" stroke="#a89050" fill="none"/></svg>
<div class="t" style="right:3px;top:641px;font-size:12.3px;font-weight:bold">2018.12.17 09:41</div>
<div class="t" style="left:836px;top:641px;font-size:12.3px;font-weight:bold">n</div>
<div class="a" style="left:15px;top:657px;width:1327px;height:20px;background:#ffffff;border-bottom:1px solid #d6d6d6"></div>
<div class="a" style="left:1211px;top:657px;width:1px;height:20px;background:#d0d0d0"></div>
<svg style="left:16px;top:661px" width="14" height="11"><rect x="0.5" y="0.5" width="13" height="10" fill="#f8e8a8" stroke="#a89050"/><path d="M1 1l6 5 6-5" stroke="#a89050" fill="none"/></svg>
<div class="t" style="right:3px;top:661px;font-size:12.3px;font-weight:bold">2018.12.17 09:41</div>
<div class="t" style="left:836px;top:661px;font-size:12.3px;font-weight:bold">n</div>
<div class="t" style="left:37px;top:601px;font-size:12.5px;font-weight:bold">Welcome</div>
<div class="t" style="left:37px;top:621px;font-size:12.5px;font-weight:bold">Built-in V</div>
<div class="t" style="left:37px;top:641px;font-size:12.5px;font-weight:bold">Trading S</div>
<div class="t" style="left:37px;top:661px;font-size:12.5px;font-weight:bold">Mobile tr</div>
<div class="a" style="left:340px;top:679px;width:68px;height:21px;background:#fff;border:1px solid #000;border-top:none;border-bottom-width:2px"></div>
<div class="t" style="left:28px;top:683px;font-size:11.5px;color:#707070">Trade</div>
<div class="t" style="left:76px;top:683px;font-size:11.5px;color:#707070">Exposure</div>
<div class="t" style="left:144px;top:683px;font-size:11.5px;color:#707070">Account History</div>
<div class="t" style="left:250px;top:683px;font-size:11.5px;color:#707070">News</div>
<div class="t" style="left:299px;top:683px;font-size:11.5px;color:#707070">Alerts</div>
<div class="t" style="left:349px;top:683px;font-size:11.5px;color:#000">Mailbox</div>
<div class="t" style="left:418px;top:683px;font-size:11.5px;color:#707070">Market</div>
<div class="t" style="left:475px;top:683px;font-size:11.5px;color:#707070">Signals</div>
<div class="t" style="left:532px;top:683px;font-size:11.5px;color:#707070">Articles</div>
<div class="t" style="left:608px;top:683px;font-size:11.5px;color:#707070">Code Base</div>
<div class="t" style="left:682px;top:683px;font-size:11.5px;color:#707070">Experts</div>
<div class="t" style="left:739px;top:683px;font-size:11.5px;color:#707070">Journal</div>
<div class="a" style="left:66px;top:684px;width:1px;height:14px;background:#909090"></div>
<div class="a" style="left:134px;top:684px;width:1px;height:14px;background:#909090"></div>
<div class="a" style="left:240px;top:684px;width:1px;height:14px;background:#909090"></div>
<div class="a" style="left:289px;top:684px;width:1px;height:14px;background:#909090"></div>
<div class="a" style="left:465px;top:684px;width:1px;height:14px;background:#909090"></div>
<div class="a" style="left:522px;top:684px;width:1px;height:14px;background:#909090"></div>
<div class="a" style="left:598px;top:684px;width:1px;height:14px;background:#909090"></div>
<div class="a" style="left:672px;top:684px;width:1px;height:14px;background:#909090"></div>
<div class="a" style="left:729px;top:684px;width:1px;height:14px;background:#909090"></div>
<div class="a" style="left:787px;top:684px;width:1px;height:14px;background:#909090"></div>
<div class="t" style="left:392px;top:688px;font-size:9px;color:#d03030;font-weight:bold">7</div>
<div class="t" style="left:572px;top:688px;font-size:9px;color:#d03030;font-weight:bold">238</div>
<div class="a" style="left:0px;top:702px;width:1342px;height:1px;background:#fafafa"></div>
<div class="a" style="left:0px;top:703px;width:1342px;height:22px;background:#f0f0f0;border-top:1px solid #b8b8b8"></div>
<div class="t" style="left:2px;top:711px;font-size:11px">For Help, press F1</div>
<div class="a" style="left:671px;top:705px;width:1px;height:20px;background:#c8c8c8"></div>
<div class="a" style="left:788px;top:705px;width:1px;height:20px;background:#c8c8c8"></div>
<div class="a" style="left:889px;top:705px;width:1px;height:20px;background:#c8c8c8"></div>
<div class="a" style="left:960px;top:705px;width:1px;height:20px;background:#c8c8c8"></div>
<div class="a" style="left:1031px;top:705px;width:1px;height:20px;background:#c8c8c8"></div>
<div class="a" style="left:1100px;top:705px;width:1px;height:20px;background:#c8c8c8"></div>
<div class="a" style="left:1170px;top:705px;width:1px;height:20px;background:#c8c8c8"></div>
<div class="a" style="left:1235px;top:705px;width:1px;height:20px;background:#c8c8c8"></div>
<div class="t" style="left:677px;top:711px;font-size:11px">Default</div>
<svg style="left:1240px;top:709px" width="25" height="15"><rect x="0.0" y="0" width="1.4" height="15" fill="#b02010"/><rect x="0.0" y="0" width="1.4" height="9.0" fill="#5a9a20"/><rect x="2.4" y="0" width="1.4" height="15" fill="#b02010"/><rect x="2.4" y="0" width="1.4" height="8.2" fill="#5a9a20"/><rect x="4.8" y="0" width="1.4" height="15" fill="#b02010"/><rect x="4.8" y="0" width="1.4" height="7.4" fill="#5a9a20"/><rect x="7.2" y="0" width="1.4" height="15" fill="#b02010"/><rect x="7.2" y="0" width="1.4" height="6.6" fill="#5a9a20"/><rect x="9.6" y="0" width="1.4" height="15" fill="#b02010"/><rect x="9.6" y="0" width="1.4" height="5.8" fill="#5a9a20"/><rect x="12.0" y="0" width="1.4" height="15" fill="#b02010"/><rect x="12.0" y="0" width="1.4" height="5.0" fill="#5a9a20"/><rect x="14.4" y="0" width="1.4" height="15" fill="#b02010"/><rect x="14.4" y="0" width="1.4" height="4.2" fill="#5a9a20"/><rect x="16.8" y="0" width="1.4" height="15" fill="#b02010"/><rect x="16.8" y="0" width="1.4" height="3.4" fill="#5a9a20"/><rect x="19.2" y="0" width="1.4" height="15" fill="#b02010"/><rect x="19.2" y="0" width="1.4" height="2.6" fill="#5a9a20"/><rect x="21.6" y="0" width="1.4" height="15" fill="#b02010"/><rect x="21.6" y="0" width="1.4" height="1.8" fill="#5a9a20"/></svg>
<div class="t" style="left:1268px;top:711px;font-size:11px">440/2 kb</div>
<div class="a" style="left:88px;top:300px;width:754px;height:379px;background:#f0f0f0;border:1px solid #c4c4c4;box-shadow:1px 2px 8px rgba(0,0,0,0.28)"></div>
<div class="a" style="left:89px;top:301px;width:751px;height:29px;background:#fff"></div>
<div class="t" style="left:96px;top:310px;font-size:11.5px;color:#999">Order</div>
<div class="a" style="left:722px;top:315px;width:10px;height:1px;background:#888"></div>
<div class="a" style="left:766px;top:308px;width:10px;height:10px;border:1px solid #ccc"></div>
<svg style="left:813px;top:309px" width="10" height="10"><path d="M0 0L10 10M10 0L0 10" stroke="#666" stroke-width="1"/></svg>
<div class="a" style="left:96px;top:343px;width:299px;height:327px;background:#fff;border:1px solid #fff;border-top:2px solid #a0a0a0;border-left:2px solid #a0a0a0"></div>
<svg style="left:97px;top:344px" width="297" height="325" viewBox="97 344 297 325"><path d="M133.5 348V665" stroke="#c8c8c8" stroke-dasharray="3 3"/><path d="M165.5 348V665" stroke="#c8c8c8" stroke-dasharray="3 3"/><path d="M197.5 348V665" stroke="#c8c8c8" stroke-dasharray="3 3"/><path d="M229.5 348V665" stroke="#c8c8c8" stroke-dasharray="3 3"/><path d="M261.5 348V665" stroke="#c8c8c8" stroke-dasharray="3 3"/><path d="M293.5 348V665" stroke="#c8c8c8" stroke-dasharray="3 3"/><path d="M325.5 348V665" stroke="#c8c8c8" stroke-dasharray="3 3"/><path d="M101 377.5H351" stroke="#c8c8c8" stroke-dasharray="3 3"/><path d="M101 409.5H351" stroke="#c8c8c8" stroke-dasharray="3 3"/><path d="M101 441.5H351" stroke="#c8c8c8" stroke-dasharray="3 3"/><path d="M101 473.5H351" stroke="#c8c8c8" stroke-dasharray="3 3"/><path d="M101 505.5H351" stroke="#c8c8c8" stroke-dasharray="3 3"/><path d="M101 537.5H351" stroke="#c8c8c8" stroke-dasharray="3 3"/><path d="M101 569.5H351" stroke="#c8c8c8" stroke-dasharray="3 3"/><path d="M101 601.5H351" stroke="#c8c8c8" stroke-dasharray="3 3"/><path d="M101 633.5H351" stroke="#c8c8c8" stroke-dasharray="3 3"/><path d="M101 417.5 L104 417 L106 422 L108 418 L110 425 L112 440 L114 432 L116 406 L118 398 L120 388 L122 380 L124 386 L126 372 L127 364 L129 380 L131 378 L133 386 L135 390 L137 378 L139 383 L141 398 L143 408 L145 413 L147 416 L149 430 L151 428 L153 444 L155 440 L157 455 L159 458 L161 452 L163 446 L166 440 L168 432 L170 417.5 H351" stroke="#e07070" fill="none" stroke-width="1"/><path d="M101 602.5 L104 603 L106 612 L108 604 L110 610 L112 626 L114 620 L116 590 L118 580 L120 570 L122 566 L124 566 L126 556 L127 551 L129 568 L131 572 L133 580 L135 575 L137 567 L139 573 L141 588 L143 596 L145 606 L147 604 L149 620 L151 617 L153 630 L155 640 L157 648 L159 646 L161 632 L163 628 L166 622 L168 610 L170 602.5 H351" stroke="#2060c0" fill="none" stroke-width="1"/><rect x="100.5" y="347.5" width="251" height="318" fill="none" stroke="#000"/><path d="M351 377.5h3" stroke="#000"/><path d="M351 409.5h3" stroke="#000"/><path d="M351 441.5h3" stroke="#000"/><path d="M351 473.5h3" stroke="#000"/><path d="M351 505.5h3" stroke="#000"/><path d="M351 537.5h3" stroke="#000"/><path d="M351 569.5h3" stroke="#000"/><path d="M351 633.5h3" stroke="#000"/><path d="M351 662.5h3" stroke="#000"/><rect x="352" y="413" width="41" height="10" fill="#f07070"/><rect x="352" y="598" width="41" height="11" fill="#1a70e0"/></svg>
<div class="t" style="left:103px;top:350px;font-size:10px;letter-spacing:-0.2px">EURUSD.hw</div>
<div class="t" style="left:356px;top:373px;font-size:10px;letter-spacing:-0.3px">1.13187</div>
<div class="t" style="left:356px;top:405px;font-size:10px;letter-spacing:-0.3px">1.13181</div>
<div class="t" style="left:356px;top:437px;font-size:10px;letter-spacing:-0.3px">1.13176</div>
<div class="t" style="left:356px;top:469px;font-size:10px;letter-spacing:-0.3px">1.13170</div>
<div class="t" style="left:356px;top:501px;font-size:10px;letter-spacing:-0.3px">1.13165</div>
<div class="t" style="left:356px;top:533px;font-size:10px;letter-spacing:-0.3px">1.13159</div>
<div class="t" style="left:356px;top:565px;font-size:10px;letter-spacing:-0.3px">1.13153</div>
<div class="t" style="left:356px;top:628px;font-size:10px;letter-spacing:-0.3px">1.13142</div>
<div class="t" style="left:356px;top:658px;font-size:10px;letter-spacing:-0.3px">1.13137</div>
<div class="t" style="left:356px;top:413px;font-size:10px;letter-spacing:-0.3px;color:#fff">1.13180</div>
<div class="t" style="left:356px;top:599px;font-size:10px;letter-spacing:-0.3px;color:#fff">1.13148</div>
<div class="t" style="right:850px;top:348px;font-size:11px;letter-spacing:-0.1px">Symbol:</div>
<div class="t" style="right:850px;top:374px;font-size:11px;letter-spacing:-0.1px">Volume:</div>
<div class="t" style="right:850px;top:400px;font-size:11px;letter-spacing:-0.1px">Stop Loss:</div>
<div class="t" style="right:850px;top:426px;font-size:11px;letter-spacing:-0.1px">Comment:</div>
<div class="t" style="right:850px;top:452px;font-size:11px;letter-spacing:-0.1px">Type:</div>
<div class="a" style="left:501px;top:343px;width:323px;height:21px;background:#e5e5e5;border:1px solid #adadad"></div>
<div class="t" style="left:505px;top:348px;font-size:11px;letter-spacing:-0.2px">EURUSD.hw, Euro vs US Dollar</div>
<svg style="left:808px;top:350px" width="10" height="6"><path d="M0.5 0.5L5 5L9.5 0.5" stroke="#404040" fill="none"/></svg>
<div class="a" style="left:501px;top:369px;width:105px;height:21px;background:#fff;border:1px solid #7a7a7a"></div>
<div class="t" style="left:507px;top:374px;font-size:11px">1.00</div>
<svg style="left:591px;top:376px" width="10" height="6"><path d="M0.5 0.5L5 5L9.5 0.5" stroke="#404040" fill="none"/></svg>
<div class="a" style="left:501px;top:395px;width:105px;height:20px;background:#fff;border:1px solid #7a7a7a"></div>
<div class="a" style="left:589px;top:396px;width:16px;height:18px;background:#f0f0f0;border-left:1px solid #c8c8c8"></div>
<svg style="left:593px;top:398px" width="8" height="14"><path d="M0 5L4 1L8 5z M0 9L4 13L8 9z" fill="#303030"/><path d="M0 7h8" stroke="#c8c8c8"/></svg>
<div class="t" style="right:756px;top:400px;font-size:11px">0.00000</div>
<div class="a" style="left:717px;top:395px;width:106px;height:20px;background:#fff;border:1px solid #7a7a7a"></div>
<div class="a" style="left:806px;top:396px;width:16px;height:18px;background:#f0f0f0;border-left:1px solid #c8c8c8"></div>
<svg style="left:810px;top:398px" width="8" height="14"><path d="M0 5L4 1L8 5z M0 9L4 13L8 9z" fill="#303030"/><path d="M0 7h8" stroke="#c8c8c8"/></svg>
<div class="t" style="right:539px;top:400px;font-size:11px">0.00000</div>
<div class="t" style="left:655px;top:400px;font-size:11px;letter-spacing:-0.1px">Take Profit:</div>
<div class="a" style="left:501px;top:421px;width:323px;height:20px;background:#fff;border:1px solid #7a7a7a"></div>
<div class="a" style="left:501px;top:447px;width:323px;height:21px;background:#e5e5e5;border:1px solid #adadad"></div>
<div class="t" style="left:505px;top:452px;font-size:11px;letter-spacing:-0.1px">Market Execution</div>
<svg style="left:808px;top:454px" width="10" height="6"><path d="M0.5 0.5L5 5L9.5 0.5" stroke="#404040" fill="none"/></svg>
<div class="a" style="left:403px;top:482px;width:428px;height:188px;border:1px solid #dcdcdc"></div>
<div class="a" style="left:408px;top:477px;width:90px;height:12px;background:#f0f0f0"></div>
<div class="t" style="left:411px;top:478px;font-size:11px;letter-spacing:-0.1px">Market Execution</div>
<div class="t" style="left:512px;top:511px;font-size:28px;letter-spacing:-1.1px;color:#000">1.1314<span style="font-size:20px;letter-spacing:0">8</span></div>
<div class="t" style="left:611px;top:511px;font-size:28px;color:#000">/</div>
<div class="t" style="left:630px;top:511px;font-size:28px;letter-spacing:-1.1px;color:#000">1.1318<span style="font-size:20px;letter-spacing:0">0</span></div>
<div class="a" style="left:419px;top:558px;width:186px;height:21px;background:#ff8080;border:1px solid #c89090;box-shadow:inset 0 0 0 1px #ffb0b0"></div>
<div class="t" style="left:212px;width:600px;text-align:center;top:564px;font-size:11px">Sell by Market</div>
<div class="a" style="left:629px;top:558px;width:186px;height:21px;background:#9cbaff;border:1px solid #9aa8c8;box-shadow:inset 0 0 0 1px #c0d4ff"></div>
<div class="t" style="left:422px;width:600px;text-align:center;top:564px;font-size:11px">Buy by Market</div>
<div class="a" style="left:419px;top:588px;width:396px;height:21px;background:#c8c8c8"></div>
<div class="t" style="left:316px;width:600px;text-align:center;top:624px;font-size:11px;letter-spacing:-0.05px">Attention! The trade will be executed at market conditions, difference with</div>
<div class="t" style="left:316px;width:600px;text-align:center;top:637px;font-size:11px;letter-spacing:-0.05px">requested price may be significant!</div>
</body></html>
